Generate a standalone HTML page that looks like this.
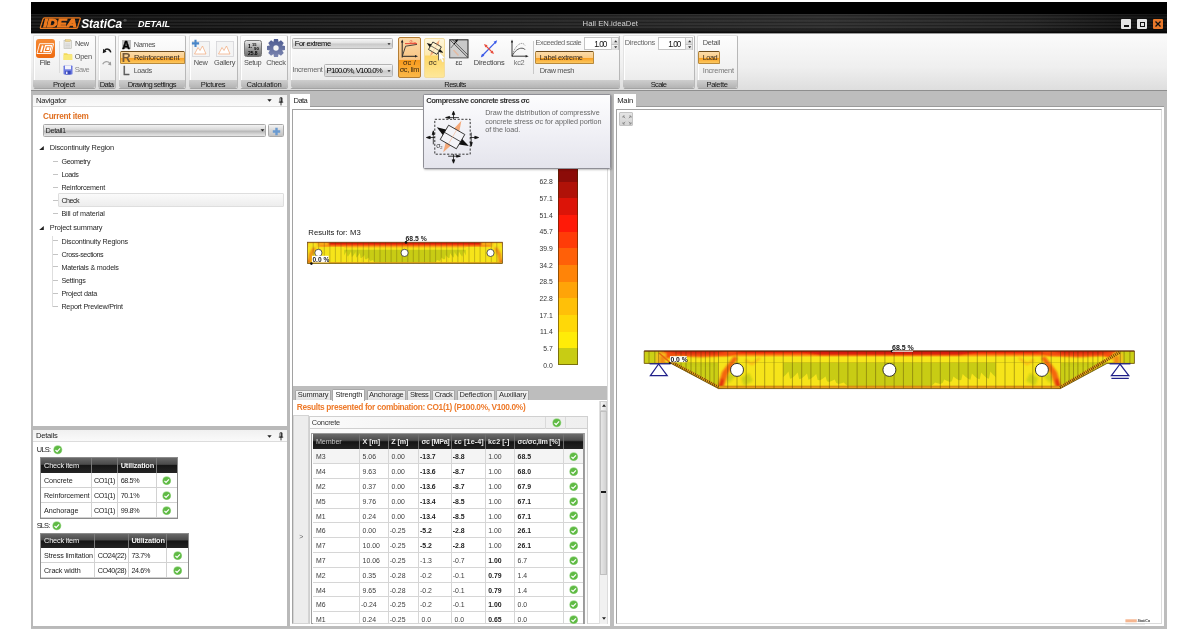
<!DOCTYPE html>
<html><head><meta charset="utf-8"><title>IDEA StatiCa Detail</title>
<style>
html,body{margin:0;padding:0}
body{width:1200px;height:630px;overflow:hidden;background:#fff;position:relative;font-family:"Liberation Sans",sans-serif;font-size:7px;color:#333}
div{position:absolute;box-sizing:border-box}
.t{white-space:nowrap;color:#3a3a3a}
.b{font-weight:bold}
svg{position:absolute;left:0;top:0;overflow:visible}
.ck{width:100%;height:100%}
.grp{background:linear-gradient(#fdfdfd,#f2f2f2 60%,#e8e8e8);border:1px solid #e2e2e2;border-right-color:#b8b8b8;border-bottom-color:#a4a4a4;border-radius:2px;box-shadow:inset 1px 1px 0 #fff}
.glab{background:linear-gradient(#cecece,#b4b4b4);border-radius:0 0 2px 2px}
.hdr{background:linear-gradient(#5a5a5a,#3a3a3a 45%,#101010 50%,#1c1c1c);}
.cell{border-right:1px solid #d4d4d4;border-bottom:1px solid #d4d4d4;background:#fff}
</style></head><body><div id="root" style="left:0;top:0;width:1200px;height:630px;will-change:transform">
<div style="left:31px;top:2px;width:1136px;height:626.5px;background:#bdbdbd"></div>
<div style="left:31px;top:2px;width:1136px;height:31px;background:#000"></div>
<div style="left:31px;top:13.6px;width:1136px;height:19px;background:repeating-linear-gradient(#1f1f1f 0,#1f1f1f .8px,#0e0e0e 1.3px,#0e0e0e 2px,#1a1a1a 2.6px,#202020 3.3px)"></div>
<div style="left:31px;top:13.6px;width:1136px;height:19px;background:linear-gradient(90deg,rgba(255,255,255,0) 0,rgba(255,255,255,.04) 30%,rgba(255,255,255,.1) 70%,rgba(255,255,255,.06) 88%,rgba(0,0,0,.3) 100%)"></div>
<div style="left:31px;top:28px;width:1136px;height:5px;background:linear-gradient(rgba(0,0,0,0),rgba(0,0,0,.75))"></div>
<svg style="left:36px;top:14px" width="140" height="18" viewBox="36 14 140 18">
<g fill="none" stroke="#ee7a1e" stroke-width="1.2"><path d="M44.6 17.8H79.4Q80.6 17.8 80.2 19L77.6 27.2Q77.2 28.4 76 28.4H41.2Q40 28.4 40.4 27.2L43 19Q43.4 17.8 44.6 17.8Z"/></g>
<text x="43.4" y="26.8" font-family="Liberation Sans,sans-serif" font-weight="bold" font-style="italic" font-size="10.2" fill="#ee7a1e" stroke="#ee7a1e" stroke-width=".9" stroke-linejoin="miter" textLength="33.4" lengthAdjust="spacingAndGlyphs">IDEA</text>
<text x="81.2" y="27.8" font-family="Liberation Sans,sans-serif" font-weight="bold" font-style="italic" font-size="12.2" fill="#fff" textLength="41" lengthAdjust="spacingAndGlyphs">StatiCa</text>
<text x="123.6" y="21.6" font-family="Liberation Sans,sans-serif" font-size="4.4" fill="#bbb">®</text>
<text x="138" y="27.3" font-family="Liberation Sans,sans-serif" font-weight="bold" font-style="italic" font-size="9.3" fill="#fff" textLength="32" lengthAdjust="spacingAndGlyphs">DETAIL</text>
</svg>
<div class="t" style="left:582.60px;top:19.2px;line-height:10px;font-size:7.7px;letter-spacing:0.041px;color:#d4d4d4">Hall EN.ideaDet</div>
<div style="left:1121px;top:19px;width:10px;height:10px;background:#e4e4e4;border-radius:1px"><div style="left:3px;top:6px;width:5px;height:1.5px;background:#111"></div></div>
<div style="left:1137px;top:19px;width:10px;height:10px;background:#e4e4e4;border-radius:1px"><div style="left:2.5px;top:2.5px;width:5px;height:5px;border:1px solid #111;border-top-width:1.5px"></div></div>
<div style="left:1153px;top:19px;width:10px;height:10px;background:#e8782a;border-radius:1px"><svg width="10" height="10" viewBox="0 0 10 10"><path d="M2.5 2.5L7.5 7.5M7.5 2.5L2.5 7.5" stroke="#111" stroke-width="1.3"/></svg></div>
<div style="left:31px;top:33px;width:1136px;height:57px;background:linear-gradient(#fbfbfb,#efefef 60%,#dedede)"></div>
<div style="left:31px;top:90px;width:1136px;height:0.9px;background:#8e8e8e"></div>
<div style="left:31px;top:33px;width:1136px;height:0.8px;background:#9a9a9a"></div>
<div class="grp" style="left:32.5px;top:34.5px;width:63px;height:54px;"></div>
<div class="glab" style="left:33px;top:80px;width:62px;height:8px;"></div>
<div class="t" style="left:53.00px;top:79.8px;line-height:10px;font-size:7.6px;letter-spacing:-0.236px;color:#161616">Project</div>
<div class="grp" style="left:97.5px;top:34.5px;width:18px;height:54px;"></div>
<div class="glab" style="left:98px;top:80px;width:17px;height:8px;"></div>
<div class="t" style="left:99.75px;top:79.8px;line-height:10px;font-size:7.6px;letter-spacing:-0.638px;color:#161616">Data</div>
<div class="grp" style="left:118px;top:34.5px;width:67.8px;height:54px;"></div>
<div class="glab" style="left:118.5px;top:80px;width:66.8px;height:8px;"></div>
<div class="t" style="left:127.65px;top:79.8px;line-height:10px;font-size:7.6px;letter-spacing:-0.480px;color:#161616">Drawing settings</div>
<div class="grp" style="left:188.5px;top:34.5px;width:49px;height:54px;"></div>
<div class="glab" style="left:189px;top:80px;width:48px;height:8px;"></div>
<div class="t" style="left:200.75px;top:79.8px;line-height:10px;font-size:7.6px;letter-spacing:-0.369px;color:#161616">Pictures</div>
<div class="grp" style="left:240px;top:34.5px;width:48px;height:54px;"></div>
<div class="glab" style="left:240.5px;top:80px;width:47px;height:8px;"></div>
<div class="t" style="left:246.50px;top:79.8px;line-height:10px;font-size:7.6px;letter-spacing:-0.236px;color:#161616">Calculation</div>
<div class="grp" style="left:290px;top:34.5px;width:330px;height:54px;"></div>
<div class="glab" style="left:290.5px;top:80px;width:329px;height:8px;"></div>
<div class="t" style="left:444.25px;top:79.8px;line-height:10px;font-size:7.6px;letter-spacing:-0.549px;color:#161616">Results</div>
<div class="grp" style="left:622.5px;top:34.5px;width:72px;height:54px;"></div>
<div class="glab" style="left:623px;top:80px;width:71px;height:8px;"></div>
<div class="t" style="left:650.75px;top:79.8px;line-height:10px;font-size:7.6px;letter-spacing:-0.702px;color:#161616">Scale</div>
<div class="grp" style="left:696.5px;top:34.5px;width:41px;height:54px;"></div>
<div class="glab" style="left:697px;top:80px;width:40px;height:8px;"></div>
<div class="t" style="left:706.50px;top:79.8px;line-height:10px;font-size:7.6px;letter-spacing:-0.380px;color:#161616">Palette</div>
<div style="left:36px;top:38.8px;width:19px;height:19px;background:linear-gradient(#f58a35,#ee6a10);border-radius:3px"><svg width="19" height="19" viewBox="0 0 19 19"><g fill="none" stroke="#fff"><path d="M3.6 4.7H17.6L15 14.5H1Z" stroke-width=".9"/><path d="M6.7 6.4L4.9 12.9" stroke-width="1.7"/><path d="M9.5 6.6H15.5L13.9 12.7H7.9Z" stroke-width="1.2"/></g><path d="M10.9 8.3H13.7L13 11H10.2Z" fill="#fff"/></svg></div>
<div class="t" style="left:39.80px;top:58px;line-height:10px;font-size:7.4px;letter-spacing:-0.331px;color:#333">File</div>
<div style="left:59.3px;top:41px;width:0.7px;height:32px;background:#dcdcdc"></div>
<svg style="left:63px;top:39px" width="10" height="10" viewBox="0 0 10 10"><rect x="1" y="1.5" width="7.5" height="8" fill="#e9e9e6" stroke="#b9b9b0" stroke-width=".6"/><rect x="2.3" y=".6" width="5" height="2" fill="#f0d890" stroke="#c9b070" stroke-width=".4"/><path d="M2.3 5H7.2M2.3 6.6H7.2M2.3 8.1H7.2" stroke="#c4c4c4" stroke-width=".6"/></svg>
<div class="t" style="left:74.90px;top:39.1px;line-height:10px;font-size:7.4px;letter-spacing:-0.334px;color:#505050">New</div>
<svg style="left:63px;top:51.4px" width="10" height="10" viewBox="0 0 10 10"><path d="M.6 2.2H4L5 3.2H9.2V9H.6Z" fill="#f3d95a"/><path d="M.6 4H9.2V9H.6Z" fill="#f8e878"/></svg>
<div class="t" style="left:74.80px;top:51.5px;line-height:10px;font-size:7.4px;letter-spacing:-0.275px;color:#505050">Open</div>
<svg style="left:63px;top:65px" width="10" height="10" viewBox="0 0 10 10"><rect x=".5" y=".5" width="9" height="9" rx=".8" fill="#6a78e0"/><rect x="2" y=".5" width="6" height="3.8" fill="#f4f4fa"/><rect x="2.4" y="6" width="5.2" height="3.5" fill="#3848b8"/><rect x="3" y="6.6" width="1.5" height="2.4" fill="#e8e8f8"/></svg>
<div class="t" style="left:74.80px;top:64.5px;line-height:10px;font-size:7.4px;letter-spacing:-0.717px;color:#8a8a8a">Save</div>
<svg style="left:101px;top:46px" width="12" height="24" viewBox="0 0 12 24"><path d="M3.4 5C4.8 2.4 8.6 2.2 9.8 6.4" fill="none" stroke="#1a1a1a" stroke-width="1.5"/><path d="M1.8 7.2L2.2 2.8L5.6 5.8Z" fill="#1a1a1a"/><path d="M1.7 18.2C3 15.2 7 14.8 8.6 17.2" fill="none" stroke="#a4a4a4" stroke-width="1.3"/><path d="M10.2 19.6L9.9 15.6L6.8 18.6Z" fill="#9a9a9a"/></svg>
<div style="left:121.8px;top:40.2px;width:9.2px;height:8.5px;background:#bebebe"></div>
<div class="t" style="left:122.20px;top:39.7px;line-height:10px;font-size:10.6px;font-weight:bold;letter-spacing:0.745px;color:#000;-webkit-text-stroke:.5px #000">A</div>
<div class="t" style="left:133.70px;top:39.5px;line-height:10px;font-size:7.4px;letter-spacing:-0.388px;color:#505050">Names</div>
<div style="left:120px;top:50.8px;width:64.8px;height:13px;background:linear-gradient(#fcdcaa,#fbcd88 50%,#f9a225 58%,#fcc860);border:1px solid #b98a3c;border-top-color:#6e4c1c;border-radius:1.5px"></div>
<div class="t" style="left:121.80px;top:51.7px;line-height:12px;font-size:12.3px;font-weight:bold;letter-spacing:-0.483px;color:#755a3c">R</div>
<div class="t" style="left:133.90px;top:53.1px;line-height:10px;font-size:7.4px;letter-spacing:-0.209px;color:#35281a">Reinforcement</div>
<div class="t" style="left:122.70px;top:64.5px;line-height:12px;font-size:12.3px;letter-spacing:0.160px;color:#5c5c5c;-webkit-text-stroke:.3px #5c5c5c">L</div>
<div class="t" style="left:133.70px;top:65.5px;line-height:10px;font-size:7.4px;letter-spacing:-0.432px;color:#505050">Loads</div>
<svg style="left:192.3px;top:40.5px" width="18" height="16" viewBox="0 0 18 16"><rect x=".5" y=".5" width="17" height="15" fill="#f4f4f4" stroke="#d4d4d8" stroke-width=".8"/><path d="M2.5 13L6 6.5L8 9.5L10.5 5L14 13Z" fill="#fff" stroke="#f2a878" stroke-width=".7"/></svg>
<svg style="left:191px;top:39px" width="9" height="9" viewBox="0 0 9 9"><path d="M4.5 .8V8M.9 4.4H8.1" stroke="#4a86c8" stroke-width="2.1"/></svg>
<svg style="left:216px;top:40.5px" width="18" height="16" viewBox="0 0 18 16"><rect x=".5" y=".5" width="17" height="15" fill="#f4f4f4" stroke="#d4d4d8" stroke-width=".8"/><path d="M2.5 13L6 6.5L8 9.5L10.5 5L14 13Z" fill="#fff" stroke="#f2a878" stroke-width=".7"/></svg>
<div class="t" style="left:193.80px;top:57.8px;line-height:10px;font-size:7.4px;letter-spacing:-0.334px;color:#505050">New</div>
<div class="t" style="left:214.00px;top:57.8px;line-height:10px;font-size:7.4px;letter-spacing:-0.348px;color:#505050">Gallery</div>
<div style="left:243.5px;top:39.5px;width:18.5px;height:17.5px;background:linear-gradient(#e8e8e8,#9a9a9a 55%,#6e6e6e);border:1px solid #777;border-radius:2.5px"></div>
<div class="t" style="left:247.93px;top:41.5px;line-height:6px;font-size:5px;font-weight:bold;color:#000">1.<span style="font-size:4px;vertical-align:1.5px">15</span></div>
<div class="t" style="left:254.05px;top:45.8px;line-height:5px;font-size:4.4px;font-weight:bold;color:#000">90</div>
<div class="t" style="left:247.93px;top:49.6px;line-height:6px;font-size:5px;font-weight:bold;color:#000">25.8</div>
<svg style="left:265.6px;top:38px" width="20" height="20" viewBox="0 0 20 20"><defs><linearGradient id="gg" x1="0" y1="0" x2="0" y2="1"><stop offset="0" stop-color="#4c5a90"/><stop offset="1" stop-color="#7c86b0"/></linearGradient></defs><polygon points="18.98,7.99 18.98,12.01 16.08,12.57 16.12,12.48 17.77,14.93 14.93,17.77 12.48,16.12 12.57,16.08 12.01,18.98 7.99,18.98 7.43,16.08 7.52,16.12 5.07,17.77 2.23,14.93 3.88,12.48 3.92,12.57 1.02,12.01 1.02,7.99 3.92,7.43 3.88,7.52 2.23,5.07 5.07,2.23 7.52,3.88 7.43,3.92 7.99,1.02 12.01,1.02 12.57,3.92 12.48,3.88 14.93,2.23 17.77,5.07 16.12,7.52 16.08,7.43" fill="url(#gg)"/><circle cx="10" cy="10" r="2.7" fill="#f4f4f4"/></svg>
<div class="t" style="left:244.00px;top:57.8px;line-height:10px;font-size:7.4px;letter-spacing:-0.407px;color:#505050">Setup</div>
<div class="t" style="left:266.20px;top:57.8px;line-height:10px;font-size:7.4px;letter-spacing:-0.315px;color:#505050">Check</div>
<div style="left:292px;top:37.8px;width:100.8px;height:11.7px;background:linear-gradient(#f6f6f6,#e2e2e2 45%,#c9c9c9 55%,#dcdcdc);border:1px solid #b4b4b4;border-radius:1.5px"></div>
<div class="t" style="left:294.80px;top:39.3px;line-height:10px;font-size:7.6px;letter-spacing:-0.451px;color:#000">For extreme</div>
<svg style="left:386.8px;top:42.6px" width="4" height="2.4" viewBox="0 0 5 3"><path d="M.5 .3H4.5L2.5 2.6Z" fill="#222"/></svg>
<div class="t" style="left:292.40px;top:65.2px;line-height:10px;font-size:7.4px;letter-spacing:-0.300px;color:#666">Increment</div>
<div style="left:324px;top:64.4px;width:68.8px;height:12.2px;background:linear-gradient(#f6f6f6,#e2e2e2 45%,#c9c9c9 55%,#dcdcdc);border:1px solid #b4b4b4;border-radius:1.5px"></div>
<div class="t" style="left:326.50px;top:66.2px;line-height:10px;font-size:7.8px;letter-spacing:-0.759px;color:#000">P100.0%, V100.0%</div>
<svg style="left:386.8px;top:69.6px" width="4" height="2.4" viewBox="0 0 5 3"><path d="M.5 .3H4.5L2.5 2.6Z" fill="#222"/></svg>
<div style="left:398px;top:37.3px;width:22.8px;height:40.3px;background:linear-gradient(#fbd9a6,#f9c585 55%,#f89a1c 57%,#fbb848 100%);border:1px solid #b47e34;border-radius:2px"></div>
<svg style="left:400px;top:38.5px" width="19" height="20" viewBox="0 0 19 20">
<path d="M2.2 18.5V2" stroke="#222" stroke-width="1" fill="none"/><path d="M.9 3.6L2.2 .6L3.5 3.6Z" fill="#222"/>
<path d="M2.2 17.3H16" stroke="#222" stroke-width="1" fill="none"/><path d="M15 16L18 17.3L15 18.6Z" fill="#222"/>
<path d="M2.4 17L5.6 7.2L17 5.4" stroke="#333" stroke-width=".9" fill="none"/>
<path d="M5 4.6H17" stroke="#e8503c" stroke-width="1.1"/>
<text x="9.6" y="3.6" font-family="Liberation Sans,sans-serif" font-size="4.6" fill="#e8503c">σ<tspan font-size="3" dy="1">lim</tspan></text>
</svg>
<div class="t" style="left:402.90px;top:57.7px;line-height:10px;font-size:7.4px;letter-spacing:0.155px;color:#3a2810">σc /</div>
<div class="t" style="left:399.65px;top:64.7px;line-height:10px;font-size:7.4px;letter-spacing:-0.333px;color:#3a2810">σc, lim</div>
<div style="left:423.5px;top:37.5px;width:21.5px;height:40.1px;background:linear-gradient(#fef6dc,#fde9ae 42%,#fdd766 45%,#fee798 100%);border:1px solid #f3dc9c;border-radius:2px"></div>
<svg style="left:420.5px;top:34.1px" width="28" height="28" viewBox="0 0 53.3 53.3"><path d="M35.4 10.8L33.3 21.4L28.1 18.4Z" fill="#f4a878"/><path d="M17.2 42.3L24.9 35.6L19.7 32.6Z" fill="#f4a878"/>
<path d="M22.6 15.2L38.8 24.5L30.4 38.8L14.2 29.5Z" fill="#fef2cc" stroke="#222" stroke-width="1.6"/>
<path d="M18.4 22.3L34.6 31.7" stroke="#222" stroke-width="1.2"/>
<path d="M30.7 19.9L22.3 34.1" stroke="#f4b088" stroke-width="1.2" opacity=".7"/>
<path d="M10.8 17.2L20 19.5L16.8 25.1Z" fill="#111"/><path d="M42.8 35.9L33 34.5L36.2 28.9Z" fill="#111"/></svg>
<div class="t" style="left:428.50px;top:57.7px;line-height:10px;font-size:7.4px;letter-spacing:-0.134px;color:#3a3020">σc</div>
<svg style="left:438px;top:50.8px" width="8" height="12" viewBox="0 0 8 12"><path d="M.7 .6V9.6L2.8 7.8L4.3 11.2L5.9 10.5L4.4 7.2H7.2Z" fill="#fff" stroke="#d8d0b8" stroke-width=".4"/><path d="M.5 .6V9.4" stroke="#333" stroke-width=".7"/></svg>
<svg style="left:448.6px;top:38.6px" width="20" height="20" viewBox="0 0 20 20">
<rect x=".8" y=".8" width="18.2" height="18" fill="#c9c9c9" stroke="#222" stroke-width="1"/>
<path d="M.8 .8L19 18.8" stroke="#222" stroke-width="1"/><path d="M3.5 .8L19 16" stroke="#333" stroke-width=".7"/>
<path d="M8 1.5L1.8 9" stroke="#111" stroke-width="1"/><path d="M9 .6L5.8 1.6L7.8 3.6Z" fill="#111"/>
<path d="M4.5 11L9.5 16.5" stroke="#f0a070" stroke-width="1.6"/>
<path d="M.8 .8V18.8H19Z" fill="#d6d6d6" opacity=".5"/>
</svg>
<div class="t" style="left:455.60px;top:57.9px;line-height:10px;font-size:7.4px;letter-spacing:-0.299px;color:#333">εc</div>
<svg style="left:479px;top:38.5px" width="20" height="20" viewBox="0 0 20 20">
<path d="M3 17L17 2.6" stroke="#3a5ae8" stroke-width="1.2"/><path d="M18.2 1.2L14.6 2.8L16.8 5Z" fill="#3a5ae8"/><path d="M1.8 18.4L3 14.8L5.4 16.8Z" fill="#3a5ae8"/>
<path d="M6.5 6.5L13.5 13.5" stroke="#e85040" stroke-width="1.1"/><path d="M5 5L8.6 6.2L6.4 8.4Z" fill="#e85040"/><path d="M15 15L11.4 13.8L13.6 11.6Z" fill="#e85040"/>
</svg>
<div class="t" style="left:473.80px;top:57.7px;line-height:10px;font-size:7.4px;letter-spacing:-0.230px;color:#444">Directions</div>
<svg style="left:509.6px;top:39px" width="20" height="19" viewBox="0 0 20 19">
<path d="M2 17.6V2" stroke="#222" stroke-width=".9" fill="none"/><path d="M.9 3.4L2 .6L3.1 3.4Z" fill="#222"/>
<path d="M2 17.2H16.4" stroke="#222" stroke-width=".9" fill="none"/><path d="M15.6 16L18.6 17.2L15.6 18.4Z" fill="#222"/>
<path d="M2.2 17C4 9 8.5 4.2 12 4.4C13.6 4.5 14.4 5.4 15 6.4" stroke="#555" stroke-width=".6" fill="none" stroke-dasharray="1.2 .8"/>
<path d="M2.2 17C4.5 12 8.5 9 12 9.2C13.6 9.3 14.6 10 15.2 10.8" stroke="#333" stroke-width=".8" fill="none"/>
</svg>
<div class="t" style="left:513.80px;top:57.7px;line-height:10px;font-size:7.4px;letter-spacing:-0.305px;color:#707070">kc2</div>
<div style="left:533.2px;top:40.5px;width:0.7px;height:33.5px;background:#c8c8c8"></div>
<div class="t" style="left:535.60px;top:37.6px;line-height:10px;font-size:7.4px;letter-spacing:-0.474px;color:#666">Exceeded scale</div>
<div style="left:584.3px;top:37.3px;width:34.9px;height:13px;background:#fff;border:1px solid #c4c4c4"></div>
<div class="t" style="left:594.20px;top:40px;line-height:10px;font-size:8.2px;letter-spacing:-0.939px;color:#111">1.00</div>
<div style="left:610.6px;top:38px;width:7.8px;height:5.6px;background:linear-gradient(#fafafa,#d8d8d8);border-left:.6px solid #ccc"><svg style="left:2.4px;top:1.6px" width="3.4" height="2.4" viewBox="0 0 4 3"><path d="M0 2.8H4L2 .3Z" fill="#333"/></svg></div>
<div style="left:610.6px;top:44.4px;width:7.8px;height:5.2px;background:linear-gradient(#fafafa,#d8d8d8);border-left:.6px solid #ccc"><svg style="left:2.4px;top:1.4px" width="3.4" height="2.4" viewBox="0 0 4 3"><path d="M0 .2H4L2 2.7Z" fill="#333"/></svg></div>
<div style="left:610.6px;top:43.6px;width:7.8px;height:0.8px;background:#c0c0c0"></div>
<div style="left:535.3px;top:50.6px;width:59.1px;height:13.2px;background:linear-gradient(#fcdcaa,#fbcd88 50%,#f9a225 58%,#fcc860);border:1px solid #b98a3c;border-top-color:#6e4c1c;border-radius:1.5px"></div>
<div class="t" style="left:539.80px;top:53px;line-height:10px;font-size:7.4px;letter-spacing:-0.315px;color:#35281a">Label extreme</div>
<div class="t" style="left:539.80px;top:65.6px;line-height:10px;font-size:7.4px;letter-spacing:-0.346px;color:#505050">Draw mesh</div>
<div class="t" style="left:624.80px;top:37.6px;line-height:10px;font-size:7.4px;letter-spacing:-0.270px;color:#666">Directions</div>
<div style="left:658px;top:37.3px;width:35.2px;height:13px;background:#fff;border:1px solid #c4c4c4"></div>
<div class="t" style="left:668.20px;top:40px;line-height:10px;font-size:8.2px;letter-spacing:-0.939px;color:#111">1.00</div>
<div style="left:684.6px;top:38px;width:7.8px;height:5.6px;background:linear-gradient(#fafafa,#d8d8d8);border-left:.6px solid #ccc"><svg style="left:2.4px;top:1.6px" width="3.4" height="2.4" viewBox="0 0 4 3"><path d="M0 2.8H4L2 .3Z" fill="#333"/></svg></div>
<div style="left:684.6px;top:44.4px;width:7.8px;height:5.2px;background:linear-gradient(#fafafa,#d8d8d8);border-left:.6px solid #ccc"><svg style="left:2.4px;top:1.4px" width="3.4" height="2.4" viewBox="0 0 4 3"><path d="M0 .2H4L2 2.7Z" fill="#333"/></svg></div>
<div style="left:684.6px;top:43.6px;width:7.8px;height:0.8px;background:#c0c0c0"></div>
<div class="t" style="left:702.80px;top:38px;line-height:10px;font-size:7.4px;letter-spacing:-0.270px;color:#505050">Detail</div>
<div style="left:698px;top:50.6px;width:21.8px;height:13.2px;background:linear-gradient(#fcdcaa,#fbcd88 50%,#f9a225 58%,#fcc860);border:1px solid #b98a3c;border-top-color:#6e4c1c;border-radius:1.5px"></div>
<div class="t" style="left:702.80px;top:53px;line-height:10px;font-size:7.4px;letter-spacing:-0.540px;color:#35281a">Load</div>
<div class="t" style="left:702.80px;top:65.6px;line-height:10px;font-size:7.4px;letter-spacing:-0.211px;color:#777">Increment</div>
<div style="left:31px;top:90.9px;width:259px;height:537.6px;background:#b9b9b9"></div>
<div style="left:33.3px;top:95px;width:253.8px;height:331.3px;background:#fff"></div>
<div style="left:33.3px;top:95px;width:253.8px;height:12.2px;background:linear-gradient(#f0f0f0,#fafafa);border-bottom:1px solid #dcdcdc"></div>
<div class="t" style="left:36.00px;top:95.7px;line-height:10px;font-size:7.6px;letter-spacing:-0.247px;color:#222">Navigator</div>
<svg style="left:267px;top:99.4px" width="5" height="3" viewBox="0 0 5 3"><path d="M.3 .2H4.7L2.5 2.8Z" fill="#222"/></svg>
<svg style="left:277.6px;top:96.8px" width="6" height="9" viewBox="0 0 6 9"><path d="M2 .8H4V5H2Z" fill="none" stroke="#222" stroke-width=".8"/><path d="M.8 5.2H5.2M3 5.2V8.4" stroke="#222" stroke-width=".9"/><path d="M3.6 .8V5" stroke="#222" stroke-width=".9"/></svg>
<div class="t" style="left:43.00px;top:110.6px;line-height:12px;font-size:8.2px;font-weight:bold;letter-spacing:-0.271px;color:#e07022">Current item</div>
<div style="left:43px;top:123.6px;width:223.4px;height:13.8px;background:linear-gradient(#f2f2f2,#dadada 40%,#b9b9b9 58%,#d4d4d4 80%,#e6e6e6);border:1px solid #a9a9a9;border-radius:1.5px"></div>
<div class="t" style="left:45.60px;top:125.6px;line-height:10px;font-size:7.4px;letter-spacing:-0.433px;color:#222">Detail1</div>
<svg style="left:260.4px;top:129.4px" width="5" height="3" viewBox="0 0 5 3"><path d="M.5 .3H4.5L2.5 2.6Z" fill="#222"/></svg>
<div style="left:268.2px;top:123.6px;width:15.6px;height:13.8px;background:linear-gradient(#f4f4f4,#d6d6d6 50%,#c2c2c2);border:1px solid #a9a9a9;border-radius:1.5px"><svg style="left:3.2px;top:2.6px" width="9" height="9" viewBox="0 0 9 9"><path d="M4.5 .8V8.2M.8 4.5H8.2" stroke="#6a9ad0" stroke-width="2.4"/></svg></div>
<svg style="left:38.6px;top:146.4px" width="5" height="4" viewBox="0 0 5 4"><path d="M4.8 0V4H.2Z" fill="#222"/></svg>
<div class="t" style="left:49.80px;top:143.1px;line-height:10px;font-size:7.4px;letter-spacing:-0.158px;color:#262626">Discontinuity Region</div>
<svg style="left:38.6px;top:225.9px" width="5" height="4" viewBox="0 0 5 4"><path d="M4.8 0V4H.2Z" fill="#222"/></svg>
<div class="t" style="left:49.80px;top:222.6px;line-height:10px;font-size:7.4px;letter-spacing:-0.194px;color:#262626">Project summary</div>
<div style="left:58.3px;top:193.4px;width:225.5px;height:14px;background:linear-gradient(#fafafa,#ededed);border:1px solid #dedede;border-radius:1px"></div>
<div style="left:52.6px;top:160.9px;width:5px;height:0.7px;background:#c4c4c4"></div>
<div class="t" style="left:61.40px;top:157.2px;line-height:10px;font-size:7.2px;letter-spacing:-0.351px;color:#262626">Geometry</div>
<div style="left:52.6px;top:174.1px;width:5px;height:0.7px;background:#c4c4c4"></div>
<div class="t" style="left:61.40px;top:170.4px;line-height:10px;font-size:7.2px;letter-spacing:-0.523px;color:#262626">Loads</div>
<div style="left:52.6px;top:186.9px;width:5px;height:0.7px;background:#c4c4c4"></div>
<div class="t" style="left:61.40px;top:183.2px;line-height:10px;font-size:7.2px;letter-spacing:-0.232px;color:#262626">Reinforcement</div>
<div style="left:52.6px;top:200px;width:5px;height:0.7px;background:#c4c4c4"></div>
<div class="t" style="left:61.40px;top:196.3px;line-height:10px;font-size:7.2px;letter-spacing:-0.561px;color:#262626">Check</div>
<div style="left:52.6px;top:213.1px;width:5px;height:0.7px;background:#c4c4c4"></div>
<div class="t" style="left:61.40px;top:209.4px;line-height:10px;font-size:7.2px;letter-spacing:-0.107px;color:#262626">Bill of material</div>
<div style="left:52.6px;top:240.4px;width:5px;height:0.7px;background:#c4c4c4"></div>
<div class="t" style="left:61.40px;top:236.7px;line-height:10px;font-size:7.2px;letter-spacing:-0.116px;color:#262626">Discontinuity Regions</div>
<div style="left:52.6px;top:253.5px;width:5px;height:0.7px;background:#c4c4c4"></div>
<div class="t" style="left:61.40px;top:249.8px;line-height:10px;font-size:7.2px;letter-spacing:-0.401px;color:#262626">Cross-sections</div>
<div style="left:52.6px;top:266.4px;width:5px;height:0.7px;background:#c4c4c4"></div>
<div class="t" style="left:61.40px;top:262.7px;line-height:10px;font-size:7.2px;letter-spacing:-0.212px;color:#262626">Materials &amp; models</div>
<div style="left:52.6px;top:279.6px;width:5px;height:0.7px;background:#c4c4c4"></div>
<div class="t" style="left:61.40px;top:275.9px;line-height:10px;font-size:7.2px;letter-spacing:-0.227px;color:#262626">Settings</div>
<div style="left:52.6px;top:292.6px;width:5px;height:0.7px;background:#c4c4c4"></div>
<div class="t" style="left:61.40px;top:288.9px;line-height:10px;font-size:7.2px;letter-spacing:-0.235px;color:#262626">Project data</div>
<div style="left:52.6px;top:305.7px;width:5px;height:0.7px;background:#c4c4c4"></div>
<div class="t" style="left:61.40px;top:302px;line-height:10px;font-size:7.2px;letter-spacing:-0.221px;color:#262626">Report Preview/Print</div>
<div style="left:52.2px;top:236px;width:0.7px;height:70.5px;background:#dedede"></div>
<div style="left:33.3px;top:430px;width:253.8px;height:196px;background:#fff"></div>
<div style="left:33.3px;top:430px;width:253.8px;height:12.2px;background:linear-gradient(#f0f0f0,#fafafa);border-bottom:1px solid #dcdcdc"></div>
<div class="t" style="left:36.00px;top:431px;line-height:10px;font-size:7.6px;letter-spacing:-0.247px;color:#222">Details</div>
<svg style="left:267px;top:434.6px" width="5" height="3" viewBox="0 0 5 3"><path d="M.3 .2H4.7L2.5 2.8Z" fill="#222"/></svg>
<svg style="left:277.6px;top:432px" width="6" height="9" viewBox="0 0 6 9"><path d="M2 .8H4V5H2Z" fill="none" stroke="#222" stroke-width=".8"/><path d="M.8 5.2H5.2M3 5.2V8.4" stroke="#222" stroke-width=".9"/><path d="M3.6 .8V5" stroke="#222" stroke-width=".9"/></svg>
<div class="t" style="left:36.80px;top:445.2px;line-height:10px;font-size:7.4px;letter-spacing:-0.713px;color:#222">ULS:</div>
<div style="left:53.2px;top:445.2px;width:9.6px;height:9.6px"><svg class="ck" viewBox="0 0 10 10"><circle cx="5" cy="5" r="4.7" fill="#a4da94"/><circle cx="5" cy="5" r="4" fill="#5fba44"/><path d="M2.6 5.2 L4.3 6.9 L7.4 3.5" fill="none" stroke="#fff" stroke-width="1.3"/></svg></div>
<div class="t" style="left:36.80px;top:520.8px;line-height:10px;font-size:7.4px;letter-spacing:-0.861px;color:#222">SLS:</div>
<div style="left:51.8px;top:521px;width:9.6px;height:9.6px"><svg class="ck" viewBox="0 0 10 10"><circle cx="5" cy="5" r="4.7" fill="#a4da94"/><circle cx="5" cy="5" r="4" fill="#5fba44"/><path d="M2.6 5.2 L4.3 6.9 L7.4 3.5" fill="none" stroke="#fff" stroke-width="1.3"/></svg></div>
<div style="left:40px;top:457.2px;width:138px;height:61.6px;background:#8c8c8c"></div>
<div style="left:41px;top:458.2px;width:136px;height:14.6px;background:linear-gradient(#686868,#4a4a4a 42%,#161616 50%,#242424);"></div>
<div class="t" style="left:44.00px;top:460.8px;line-height:10px;font-size:7.4px;letter-spacing:-0.201px;color:#f2f2f2">Check item</div>
<div style="left:90.6px;top:458.2px;width:0.8px;height:14.6px;background:#7a7a7a"></div>
<div style="left:117.3px;top:458.2px;width:0.8px;height:14.6px;background:#7a7a7a"></div>
<div class="t" style="left:120.70px;top:460.8px;line-height:10px;font-size:7.4px;font-weight:bold;letter-spacing:-0.177px;color:#f2f2f2">Utilization</div>
<div style="left:156.2px;top:458.2px;width:0.8px;height:14.6px;background:#7a7a7a"></div>
<div style="left:41px;top:472.8px;width:136px;height:15px;background:#fff;border-bottom:1px solid #d2d2d2"></div>
<div class="t" style="left:44.00px;top:475.9px;line-height:10px;font-size:7.2px;letter-spacing:-0.077px;color:#1c1c1c">Concrete</div>
<div style="left:90.6px;top:472.8px;width:0.8px;height:15px;background:#d2d2d2"></div>
<div class="t" style="left:94.00px;top:475.9px;line-height:10px;font-size:7.2px;letter-spacing:-0.434px;color:#1c1c1c">CO1(1)</div>
<div style="left:117.3px;top:472.8px;width:0.8px;height:15px;background:#d2d2d2"></div>
<div class="t" style="left:120.70px;top:475.9px;line-height:10px;font-size:7.2px;letter-spacing:-0.363px;color:#1c1c1c">68.5%</div>
<div style="left:156.2px;top:472.8px;width:0.8px;height:15px;background:#d2d2d2"></div>
<div style="left:162.1px;top:475.9px;width:9.4px;height:9.4px"><svg class="ck" viewBox="0 0 10 10"><circle cx="5" cy="5" r="4.7" fill="#a4da94"/><circle cx="5" cy="5" r="4" fill="#5fba44"/><path d="M2.6 5.2 L4.3 6.9 L7.4 3.5" fill="none" stroke="#fff" stroke-width="1.3"/></svg></div>
<div style="left:41px;top:487.8px;width:136px;height:15px;background:#fff;border-bottom:1px solid #d2d2d2"></div>
<div class="t" style="left:44.00px;top:490.9px;line-height:10px;font-size:7.2px;letter-spacing:-0.094px;color:#1c1c1c">Reinforcement</div>
<div style="left:90.6px;top:487.8px;width:0.8px;height:15px;background:#d2d2d2"></div>
<div class="t" style="left:94.00px;top:490.9px;line-height:10px;font-size:7.2px;letter-spacing:-0.434px;color:#1c1c1c">CO1(1)</div>
<div style="left:117.3px;top:487.8px;width:0.8px;height:15px;background:#d2d2d2"></div>
<div class="t" style="left:120.70px;top:490.9px;line-height:10px;font-size:7.2px;letter-spacing:-0.363px;color:#1c1c1c">70.1%</div>
<div style="left:156.2px;top:487.8px;width:0.8px;height:15px;background:#d2d2d2"></div>
<div style="left:162.1px;top:490.9px;width:9.4px;height:9.4px"><svg class="ck" viewBox="0 0 10 10"><circle cx="5" cy="5" r="4.7" fill="#a4da94"/><circle cx="5" cy="5" r="4" fill="#5fba44"/><path d="M2.6 5.2 L4.3 6.9 L7.4 3.5" fill="none" stroke="#fff" stroke-width="1.3"/></svg></div>
<div style="left:41px;top:502.8px;width:136px;height:15px;background:#fff;border-bottom:1px solid #d2d2d2"></div>
<div class="t" style="left:44.00px;top:505.9px;line-height:10px;font-size:7.2px;letter-spacing:-0.047px;color:#1c1c1c">Anchorage</div>
<div style="left:90.6px;top:502.8px;width:0.8px;height:15px;background:#d2d2d2"></div>
<div class="t" style="left:94.00px;top:505.9px;line-height:10px;font-size:7.2px;letter-spacing:-0.434px;color:#1c1c1c">CO1(1)</div>
<div style="left:117.3px;top:502.8px;width:0.8px;height:15px;background:#d2d2d2"></div>
<div class="t" style="left:120.70px;top:505.9px;line-height:10px;font-size:7.2px;letter-spacing:-0.363px;color:#1c1c1c">99.8%</div>
<div style="left:156.2px;top:502.8px;width:0.8px;height:15px;background:#d2d2d2"></div>
<div style="left:162.1px;top:505.9px;width:9.4px;height:9.4px"><svg class="ck" viewBox="0 0 10 10"><circle cx="5" cy="5" r="4.7" fill="#a4da94"/><circle cx="5" cy="5" r="4" fill="#5fba44"/><path d="M2.6 5.2 L4.3 6.9 L7.4 3.5" fill="none" stroke="#fff" stroke-width="1.3"/></svg></div>
<div style="left:40px;top:532.6px;width:149.4px;height:46.6px;background:#8c8c8c"></div>
<div style="left:41px;top:533.6px;width:147.4px;height:14.6px;background:linear-gradient(#686868,#4a4a4a 42%,#161616 50%,#242424);"></div>
<div class="t" style="left:44.00px;top:536.2px;line-height:10px;font-size:7.4px;letter-spacing:-0.201px;color:#f2f2f2">Check item</div>
<div style="left:94.3px;top:533.6px;width:0.8px;height:14.6px;background:#7a7a7a"></div>
<div style="left:128px;top:533.6px;width:0.8px;height:14.6px;background:#7a7a7a"></div>
<div class="t" style="left:131.40px;top:536.2px;line-height:10px;font-size:7.4px;font-weight:bold;letter-spacing:-0.177px;color:#f2f2f2">Utilization</div>
<div style="left:166.3px;top:533.6px;width:0.8px;height:14.6px;background:#7a7a7a"></div>
<div style="left:41px;top:548.2px;width:147.4px;height:15px;background:#fff;border-bottom:1px solid #d2d2d2"></div>
<div class="t" style="left:44.00px;top:551.3px;line-height:10px;font-size:7.2px;letter-spacing:-0.107px;color:#1c1c1c">Stress limitation</div>
<div style="left:94.3px;top:548.2px;width:0.8px;height:15px;background:#d2d2d2"></div>
<div class="t" style="left:97.70px;top:551.3px;line-height:10px;font-size:7.2px;letter-spacing:-0.376px;color:#1c1c1c">CO24(22)</div>
<div style="left:128px;top:548.2px;width:0.8px;height:15px;background:#d2d2d2"></div>
<div class="t" style="left:131.40px;top:551.3px;line-height:10px;font-size:7.2px;letter-spacing:-0.363px;color:#1c1c1c">73.7%</div>
<div style="left:166.3px;top:548.2px;width:0.8px;height:15px;background:#d2d2d2"></div>
<div style="left:172.85px;top:551.3px;width:9.4px;height:9.4px"><svg class="ck" viewBox="0 0 10 10"><circle cx="5" cy="5" r="4.7" fill="#a4da94"/><circle cx="5" cy="5" r="4" fill="#5fba44"/><path d="M2.6 5.2 L4.3 6.9 L7.4 3.5" fill="none" stroke="#fff" stroke-width="1.3"/></svg></div>
<div style="left:41px;top:563.2px;width:147.4px;height:15px;background:#fff;border-bottom:1px solid #d2d2d2"></div>
<div class="t" style="left:44.00px;top:566.3px;line-height:10px;font-size:7.2px;letter-spacing:-0.092px;color:#1c1c1c">Crack width</div>
<div style="left:94.3px;top:563.2px;width:0.8px;height:15px;background:#d2d2d2"></div>
<div class="t" style="left:97.70px;top:566.3px;line-height:10px;font-size:7.2px;letter-spacing:-0.376px;color:#1c1c1c">CO40(28)</div>
<div style="left:128px;top:563.2px;width:0.8px;height:15px;background:#d2d2d2"></div>
<div class="t" style="left:131.40px;top:566.3px;line-height:10px;font-size:7.2px;letter-spacing:-0.363px;color:#1c1c1c">24.6%</div>
<div style="left:166.3px;top:563.2px;width:0.8px;height:15px;background:#d2d2d2"></div>
<div style="left:172.85px;top:566.3px;width:9.4px;height:9.4px"><svg class="ck" viewBox="0 0 10 10"><circle cx="5" cy="5" r="4.7" fill="#a4da94"/><circle cx="5" cy="5" r="4" fill="#5fba44"/><path d="M2.6 5.2 L4.3 6.9 L7.4 3.5" fill="none" stroke="#fff" stroke-width="1.3"/></svg></div>
<div style="left:289.9px;top:106.3px;width:320.5px;height:519.7px;background:#fff"></div>
<div style="left:289.9px;top:94px;width:20.4px;height:13px;background:#fff"></div>
<div style="left:289.9px;top:106px;width:320.5px;height:0.6px;background:#9a9a9a"></div>
<div style="left:289.9px;top:94px;width:20.4px;height:13px;background:#fff"></div>
<div class="t" style="left:293.60px;top:96px;line-height:10px;font-size:7.6px;letter-spacing:-0.613px;color:#222">Data</div>
<div style="left:292.4px;top:108.8px;width:315.8px;height:515.4px;background:#fff;border:.7px solid #a2a2a2;border-right-color:#dcdcdc;border-bottom-color:#dcdcdc"></div>
<div class="t" style="left:308.3px;top:227.7px;line-height:10px;font-size:7.7px;color:#151515;letter-spacing:0.05px">Results for: M3</div>
<svg style="left:300px;top:232px" width="210" height="40" viewBox="300 232 210 40">
<defs>
<linearGradient id="bm1" x1="0" y1="0" x2="0" y2="1">
<stop offset="0" stop-color="#a81008"/><stop offset=".06" stop-color="#d81c08"/><stop offset=".12" stop-color="#f0440c"/><stop offset=".2" stop-color="#fb9a16"/><stop offset=".27" stop-color="#f8de18"/><stop offset=".33" stop-color="#f4e418"/><stop offset=".39" stop-color="#c8cc14"/><stop offset="1" stop-color="#c8cc14"/>
</linearGradient>
<linearGradient id="bmL" x1="0" y1="0" x2="1" y2="0">
<stop offset="0" stop-color="#f6e41a"/><stop offset=".8" stop-color="#f6e41a"/><stop offset="1" stop-color="#f6e41a" stop-opacity="0"/>
</linearGradient>
<linearGradient id="bmR" x1="1" y1="0" x2="0" y2="0">
<stop offset="0" stop-color="#f6e41a"/><stop offset=".8" stop-color="#f6e41a"/><stop offset="1" stop-color="#f6e41a" stop-opacity="0"/>
</linearGradient>
<filter id="bl1" x="-20%" y="-20%" width="140%" height="140%"><feGaussianBlur stdDeviation=".9"/></filter>
<clipPath id="cp1"><rect x="307.6" y="242.2" width="194.8" height="21.2"/></clipPath>
</defs>
<rect x="307.6" y="242.2" width="194.8" height="21.2" fill="url(#bm1)"/>
<g clip-path="url(#cp1)">
<rect x="307.6" y="247" width="36.6" height="17" fill="#f6e41a"/>
<rect x="465.8" y="247" width="36.6" height="17" fill="#f6e41a"/>
<g fill="#f6e41a"><path d="M344.0 263.4L344.0 255.4L345.5 253.0L346.6 250.6L347.4 256.6L348.5 256.0L348.5 263.4Z"/><path d="M466.0 263.4L466.0 255.4L464.5 253.0L463.4 250.6L462.6 256.6L461.5 256.0L461.5 263.4Z"/><path d="M348.4 263.4L348.4 256.0L349.9 253.8L351.0 251.6L351.8 257.1L352.9 256.3L352.9 263.4Z"/><path d="M461.6 263.4L461.6 256.0L460.1 253.8L459.0 251.6L458.2 257.1L457.1 256.3L457.1 263.4Z"/><path d="M352.8 263.4L352.8 256.3L354.3 254.2L355.4 252.1L356.2 257.4L357.3 256.9L357.3 263.4Z"/><path d="M457.2 263.4L457.2 256.3L455.7 254.2L454.6 252.1L453.8 257.4L452.7 256.9L452.7 263.4Z"/><path d="M357.2 263.4L357.2 256.9L358.7 255.0L359.8 253.1L360.6 257.9L361.7 258.1L361.7 263.4Z"/><path d="M452.8 263.4L452.8 256.9L451.3 255.0L450.2 253.1L449.4 257.9L448.3 258.1L448.3 263.4Z"/><path d="M361.6 263.4L361.6 258.1L363.1 256.6L364.2 255.1L365.0 258.9L366.1 259.6L366.1 263.4Z"/><path d="M448.4 263.4L448.4 258.1L446.9 256.6L445.8 255.1L445.0 258.9L443.9 259.6L443.9 263.4Z"/><path d="M366.0 263.4L366.0 259.6L367.5 258.6L368.6 257.6L369.4 260.1L370.5 261.1L370.5 263.4Z"/><path d="M444.0 263.4L444.0 259.6L442.5 258.6L441.4 257.6L440.6 260.1L439.5 261.1L439.5 263.4Z"/><path d="M370.4 263.4L370.4 261.1L371.9 260.6L373.0 260.1L373.8 261.4L374.9 262.6L374.9 263.4Z"/><path d="M439.6 263.4L439.6 261.1L438.1 260.6L437.0 260.1L436.2 261.4L435.1 262.6L435.1 263.4Z"/></g>
<g filter="url(#bl1)">
<rect x="307" y="242" width="12" height="6" fill="#f6e41a"/><rect x="491" y="242" width="12" height="6" fill="#f6e41a"/>
<rect x="317" y="242" width="12" height="4" fill="#fbb018"/><rect x="481" y="242" width="12" height="4" fill="#fbb018"/>
<path d="M308 264L309 254L313 247L316 248L312 256L311 264Z" fill="#f08a18"/>
<path d="M502 264L501 254L497 247L494 248L498 256L499 264Z" fill="#f08a18"/>
<path d="M307 264V258L310 264Z" fill="#e04010"/><path d="M503 264V258L500 264Z" fill="#e04010"/>
</g>
</g>
<g stroke="#5a4a10" stroke-width=".45" opacity=".7"><path d="M313.2 242.3V263.3"/><path d="M318.7 242.3V263.3"/><path d="M324.3 242.3V263.3"/><path d="M329.9 242.3V263.3"/><path d="M335.4 242.3V263.3"/><path d="M341.0 242.3V263.3"/><path d="M346.6 242.3V263.3"/><path d="M352.1 242.3V263.3"/><path d="M357.7 242.3V263.3"/><path d="M363.3 242.3V263.3"/><path d="M368.8 242.3V263.3"/><path d="M374.4 242.3V263.3"/><path d="M380.0 242.3V263.3"/><path d="M385.5 242.3V263.3"/><path d="M391.1 242.3V263.3"/><path d="M396.7 242.3V263.3"/><path d="M402.2 242.3V263.3"/><path d="M407.8 242.3V263.3"/><path d="M413.3 242.3V263.3"/><path d="M418.9 242.3V263.3"/><path d="M424.5 242.3V263.3"/><path d="M430.0 242.3V263.3"/><path d="M435.6 242.3V263.3"/><path d="M441.2 242.3V263.3"/><path d="M446.7 242.3V263.3"/><path d="M452.3 242.3V263.3"/><path d="M457.9 242.3V263.3"/><path d="M463.4 242.3V263.3"/><path d="M469.0 242.3V263.3"/><path d="M474.6 242.3V263.3"/><path d="M480.1 242.3V263.3"/><path d="M485.7 242.3V263.3"/><path d="M491.3 242.3V263.3"/><path d="M496.8 242.3V263.3"/></g>
<path d="M307.6 262.6H502.4" stroke="#d89a18" stroke-width="1"/>
<rect x="307.6" y="242.2" width="194.8" height="21.2" fill="none" stroke="#6a4a10" stroke-width=".7"/>
<g fill="#fff" stroke="#333" stroke-width=".8"><circle cx="318.4" cy="252.9" r="3.6"/><circle cx="404.6" cy="252.9" r="3.6"/><circle cx="490.5" cy="252.9" r="3.6"/></g>
<rect x="312" y="255.8" width="16.6" height="6.6" fill="#fff"/>
<circle cx="406" cy="242.4" r="1.3" fill="#111"/><circle cx="311.4" cy="263.6" r="1.3" fill="#111"/>
<text x="405.6" y="241" font-family="Liberation Sans,sans-serif" font-weight="bold" font-size="6.8" fill="#222">68.5 %</text>
<text x="312.4" y="261.8" font-family="Liberation Sans,sans-serif" font-weight="bold" font-size="6.6" fill="#222">0.0 %</text>
</svg>
<div style="left:558.4px;top:164.9px;width:20px;height:16.87px;background:#8c0c08"></div>
<div style="left:558.4px;top:181.57px;width:20px;height:16.87px;background:#b01208"></div>
<div style="left:558.4px;top:198.24px;width:20px;height:16.87px;background:#dc1408"></div>
<div style="left:558.4px;top:214.91px;width:20px;height:16.87px;background:#ff1a08"></div>
<div style="left:558.4px;top:231.58px;width:20px;height:16.87px;background:#ff3c08"></div>
<div style="left:558.4px;top:248.25px;width:20px;height:16.87px;background:#ff6008"></div>
<div style="left:558.4px;top:264.92px;width:20px;height:16.87px;background:#ff8408"></div>
<div style="left:558.4px;top:281.59px;width:20px;height:16.87px;background:#ffa408"></div>
<div style="left:558.4px;top:298.26px;width:20px;height:16.87px;background:#ffc008"></div>
<div style="left:558.4px;top:314.93px;width:20px;height:16.87px;background:#ffd808"></div>
<div style="left:558.4px;top:331.6px;width:20px;height:16.87px;background:#ffec08"></div>
<div style="left:558.4px;top:348.27px;width:20px;height:16.87px;background:#c8cc14"></div>
<div style="left:558.4px;top:164.9px;width:20px;height:200.34px;border:1px solid rgba(60,40,0,.55)"></div>
<div class="t" style="left:539.57px;top:177.37px;line-height:10px;font-size:6.8px;color:#333">62.8</div>
<div class="t" style="left:539.57px;top:194.04px;line-height:10px;font-size:6.8px;color:#333">57.1</div>
<div class="t" style="left:539.57px;top:210.71px;line-height:10px;font-size:6.8px;color:#333">51.4</div>
<div class="t" style="left:539.57px;top:227.38px;line-height:10px;font-size:6.8px;color:#333">45.7</div>
<div class="t" style="left:539.57px;top:244.05px;line-height:10px;font-size:6.8px;color:#333">39.9</div>
<div class="t" style="left:539.57px;top:260.72px;line-height:10px;font-size:6.8px;color:#333">34.2</div>
<div class="t" style="left:539.57px;top:277.39px;line-height:10px;font-size:6.8px;color:#333">28.5</div>
<div class="t" style="left:539.57px;top:294.06px;line-height:10px;font-size:6.8px;color:#333">22.8</div>
<div class="t" style="left:539.57px;top:310.73px;line-height:10px;font-size:6.8px;color:#333">17.1</div>
<div class="t" style="left:540.07px;top:327.4px;line-height:10px;font-size:6.8px;color:#333">11.4</div>
<div class="t" style="left:543.35px;top:344.07px;line-height:10px;font-size:6.8px;color:#333">5.7</div>
<div class="t" style="left:543.35px;top:360.74px;line-height:10px;font-size:6.8px;color:#333">0.0</div>
<div style="left:423.4px;top:93.8px;width:187.2px;height:74.8px;background:linear-gradient(#fdfdfe,#eeeef4 60%,#e4e4ec);border:1px solid #8f8f96;border-radius:1.5px;box-shadow:1px 1px 2px rgba(0,0,0,.25)"></div>
<div class="t" style="left:426.20px;top:95.6px;line-height:10px;font-size:7.6px;font-weight:bold;letter-spacing:-0.479px;color:#333">Compressive concrete stress σc</div>
<div class="t" style="left:485.20px;top:108.1px;line-height:10px;font-size:7.2px;letter-spacing:-0.040px;color:#666">Draw the distribution of compressive</div>
<div class="t" style="left:485.20px;top:116.8px;line-height:10px;font-size:7.2px;letter-spacing:-0.055px;color:#666">concrete stress σc for applied portion</div>
<div class="t" style="left:485.20px;top:125.2px;line-height:10px;font-size:7.2px;letter-spacing:-0.052px;color:#666">of the load.</div>
<svg style="left:426px;top:110px" width="54" height="54" viewBox="0 0 54 54">
<rect x="8.8" y="9.3" width="35.4" height="34.9" fill="none" stroke="#222" stroke-width=".9" stroke-dasharray="2.2 1.6"/>
<path d="M35.4 10.8L33.3 21.4L28.1 18.4Z" fill="#f4a878"/><path d="M17.2 42.3L24.9 35.6L19.7 32.6Z" fill="#f4a878"/>
<path d="M22.6 15.2L38.8 24.5L30.4 38.8L14.2 29.5Z" fill="#f4f4f8" stroke="#222" stroke-width=".9"/>
<path d="M18.4 22.3L34.6 31.7" stroke="#222" stroke-width=".8"/>
<path d="M30.7 19.9L22.3 34.1" stroke="#f4b088" stroke-width=".8" opacity=".7"/>
<path d="M10.8 17.2L20 19.5L16.8 25.1Z" fill="#111"/><path d="M42.8 35.9L33 34.5L36.2 28.9Z" fill="#111"/>
<g stroke="#111" stroke-width=".8" fill="#111">
<path d="M27.5 2V9.3"/><path d="M20.4 7.6H32.9"/><path d="M27.5 1.2L26.2 4.6H28.8Z"/><path d="M19.6 7.6L23.6 6.4V8.4Z"/>
<path d="M27.5 44.2V52.4"/><path d="M22.1 46.2H33.6"/><path d="M27.5 53.2L26.2 49.8H28.8Z"/><path d="M34.4 46.2L30.6 45.2V47.2Z"/>
<path d="M1.2 27.5H8.8"/><path d="M7.3 21.8V34.4"/><path d="M.4 27.5L4.2 26.2V28.8Z"/><path d="M7.3 20.8L6.2 24.6H8.4Z"/>
<path d="M44.2 27.5H51.8"/><path d="M45.2 22.6V35.2"/><path d="M52.6 27.5L48.8 26.2V28.8Z"/><path d="M45.2 36.2L44.1 32.4H46.3Z"/>
</g>
<text x="10.2" y="38" font-family="Liberation Sans,sans-serif" font-size="6.6" fill="#333">σ<tspan font-size="4" dy="1.2">2</tspan></text>
</svg>
<div style="left:293px;top:385.8px;width:314.4px;height:14.7px;background:#bdbdbd"></div>
<div style="left:295.4px;top:390px;width:35.4px;height:10.4px;background:linear-gradient(#f4f4f4,#e2e2e2);border:1px solid #a8a8a8;border-bottom:none;border-radius:1.5px 1.5px 0 0"></div>
<div class="t" style="left:297.80px;top:389.8px;line-height:10px;font-size:7.5px;letter-spacing:-0.212px;color:#2a2a2a">Summary</div>
<div style="left:366.6px;top:390px;width:39.4px;height:10.4px;background:linear-gradient(#f4f4f4,#e2e2e2);border:1px solid #a8a8a8;border-bottom:none;border-radius:1.5px 1.5px 0 0"></div>
<div class="t" style="left:369.00px;top:389.8px;line-height:10px;font-size:7.5px;letter-spacing:-0.186px;color:#2a2a2a">Anchorage</div>
<div style="left:407.4px;top:390px;width:23.4px;height:10.4px;background:linear-gradient(#f4f4f4,#e2e2e2);border:1px solid #a8a8a8;border-bottom:none;border-radius:1.5px 1.5px 0 0"></div>
<div class="t" style="left:410.00px;top:389.8px;line-height:10px;font-size:7.5px;letter-spacing:-0.509px;color:#2a2a2a">Stress</div>
<div style="left:432.4px;top:390px;width:22.4px;height:10.4px;background:linear-gradient(#f4f4f4,#e2e2e2);border:1px solid #a8a8a8;border-bottom:none;border-radius:1.5px 1.5px 0 0"></div>
<div class="t" style="left:434.80px;top:389.8px;line-height:10px;font-size:7.5px;letter-spacing:-0.397px;color:#2a2a2a">Crack</div>
<div style="left:456.6px;top:390px;width:38px;height:10.4px;background:linear-gradient(#f4f4f4,#e2e2e2);border:1px solid #a8a8a8;border-bottom:none;border-radius:1.5px 1.5px 0 0"></div>
<div class="t" style="left:459.40px;top:389.8px;line-height:10px;font-size:7.5px;letter-spacing:-0.095px;color:#2a2a2a">Deflection</div>
<div style="left:496.2px;top:390px;width:33px;height:10.4px;background:linear-gradient(#f4f4f4,#e2e2e2);border:1px solid #a8a8a8;border-bottom:none;border-radius:1.5px 1.5px 0 0"></div>
<div class="t" style="left:499.10px;top:389.8px;line-height:10px;font-size:7.5px;letter-spacing:-0.127px;color:#2a2a2a">Auxiliary</div>
<div style="left:332.4px;top:388.6px;width:32.8px;height:12.4px;background:#fff;border:1px solid #a8a8a8;border-bottom:none;border-radius:1.5px 1.5px 0 0"></div>
<div class="t" style="left:335.50px;top:389.8px;line-height:10px;font-size:7.5px;letter-spacing:-0.219px;color:#2a2a2a">Strength</div>
<div class="t" style="left:296.80px;top:402.4px;line-height:11px;font-size:8.3px;font-weight:bold;letter-spacing:-0.341px;color:#ee7a2a">Results presented for combination: CO1(1) (P100.0%, V100.0%)</div>
<div style="left:599.4px;top:400.5px;width:8px;height:223.1px;background:#f1f1f1;border-left:1px solid #e0e0e0"></div>
<div style="left:599.8px;top:400.6px;width:7.6px;height:10px;background:linear-gradient(90deg,#f6f6f6,#e0e0e0);border:.5px solid #d0d0d0"></div>
<svg style="left:601.6px;top:403.6px" width="4" height="3" viewBox="0 0 4 3"><path d="M0 2.8H4L2 .2Z" fill="#222"/></svg>
<svg style="left:601.6px;top:616.6px" width="4" height="3" viewBox="0 0 4 3"><path d="M0 .2H4L2 2.8Z" fill="#222"/></svg>
<div style="left:600.2px;top:411.4px;width:6.8px;height:163.2px;background:linear-gradient(90deg,#e6e6e6,#d2d2d2);border:.5px solid #c0c0c0"></div>
<div style="left:601.2px;top:491.2px;width:4.8px;height:1.7px;background:#1a1a1a"></div>
<div style="left:293.4px;top:415px;width:15.4px;height:208.6px;background:#ededed;border:1px solid #d4d4d4"></div>
<div class="t" style="left:299.20px;top:532.4px;line-height:10px;font-size:7px;letter-spacing:-2.213px;color:#666">&gt;</div>
<div style="left:308.8px;top:416px;width:279px;height:13.4px;background:linear-gradient(90deg,#fbfbfb,#f4f4f4 40%,#efefef);border:1px solid #d0d0d0"></div>
<div style="left:545px;top:416.6px;width:0.8px;height:12.4px;background:#dadada"></div>
<div style="left:565px;top:416.6px;width:0.8px;height:12.4px;background:#dadada"></div>
<div class="t" style="left:311.80px;top:418.2px;line-height:10px;font-size:7.4px;letter-spacing:-0.228px;color:#333">Concrete</div>
<div style="left:551.6px;top:417.8px;width:9.6px;height:9.6px"><svg class="ck" viewBox="0 0 10 10"><circle cx="5" cy="5" r="4.7" fill="#a4da94"/><circle cx="5" cy="5" r="4" fill="#5fba44"/><path d="M2.6 5.2 L4.3 6.9 L7.4 3.5" fill="none" stroke="#fff" stroke-width="1.3"/></svg></div>
<div style="left:308.8px;top:429.4px;width:279px;height:194.2px;background:#fbfbfb;border-left:1px solid #d0d0d0;border-right:1px solid #d0d0d0"></div>
<div style="left:311.4px;top:432.8px;width:274px;height:190.8px;background:#fff;border:.7px solid #a0a0a0"></div>
<div style="left:312.6px;top:433.4px;width:271.6px;height:190.2px;background:#9a9a9a"></div>
<div style="left:313px;top:433.6px;width:270.4px;height:15.8px;background:linear-gradient(#6c6c6c,#4c4c4c 42%,#141414 52%,#222);"></div>
<div class="t" style="left:315.90px;top:437.1px;line-height:10px;font-size:7.2px;letter-spacing:-0.101px;color:#c4c4c4">Member</div>
<div style="left:359.1px;top:433.6px;width:1px;height:15.8px;background:#6e6e6e"></div>
<div class="t" style="left:362.50px;top:437.1px;line-height:10px;font-size:7.2px;font-weight:bold;letter-spacing:-0.080px;color:#e8e8e8">X [m]</div>
<div style="left:387.9px;top:433.6px;width:1px;height:15.8px;background:#6e6e6e"></div>
<div class="t" style="left:391.30px;top:437.1px;line-height:10px;font-size:7.2px;font-weight:bold;letter-spacing:-0.119px;color:#e8e8e8">Z [m]</div>
<div style="left:418.1px;top:433.6px;width:1px;height:15.8px;background:#6e6e6e"></div>
<div class="t" style="left:421.50px;top:437.1px;line-height:10px;font-size:7.2px;font-weight:bold;letter-spacing:-0.316px;color:#e8e8e8">σc [MPa]</div>
<div style="left:450.9px;top:433.6px;width:1px;height:15.8px;background:#6e6e6e"></div>
<div class="t" style="left:454.30px;top:437.1px;line-height:10px;font-size:7.2px;font-weight:bold;letter-spacing:0.108px;color:#e8e8e8">εc [1e-4]</div>
<div style="left:484.7px;top:433.6px;width:1px;height:15.8px;background:#6e6e6e"></div>
<div class="t" style="left:488.10px;top:437.1px;line-height:10px;font-size:7.2px;font-weight:bold;letter-spacing:0.028px;color:#e8e8e8">kc2 [-]</div>
<div style="left:514.1px;top:433.6px;width:1px;height:15.8px;background:#6e6e6e"></div>
<div class="t" style="left:517.50px;top:437.1px;line-height:10px;font-size:7.2px;font-weight:bold;letter-spacing:-0.235px;color:#e8e8e8">σc/σc,lim [%]</div>
<div style="left:562.7px;top:433.6px;width:1px;height:15.8px;background:#6e6e6e"></div>
<div style="left:313px;top:449.4px;width:270.4px;height:14.8px;background:#f4f4f4;border-bottom:1px solid #d6d6d6"></div>
<div class="t" style="left:316.00px;top:452.4px;line-height:10px;font-size:6.9px;color:#3c3c3c">M3</div>
<div style="left:359.2px;top:449.4px;width:0.8px;height:14.8px;background:#d6d6d6"></div>
<div class="t" style="left:362.60px;top:452.4px;line-height:10px;font-size:6.9px;color:#3c3c3c">5.06</div>
<div style="left:388px;top:449.4px;width:0.8px;height:14.8px;background:#d6d6d6"></div>
<div class="t" style="left:391.40px;top:452.4px;line-height:10px;font-size:6.9px;color:#3c3c3c">0.00</div>
<div style="left:418.2px;top:449.4px;width:0.8px;height:14.8px;background:#d6d6d6"></div>
<div class="t" style="left:420.00px;top:452.4px;line-height:10px;font-size:6.9px;font-weight:bold;color:#1c1c1c">-13.7</div>
<div style="left:451px;top:449.4px;width:0.8px;height:14.8px;background:#d6d6d6"></div>
<div class="t" style="left:452.80px;top:452.4px;line-height:10px;font-size:6.9px;font-weight:bold;color:#1c1c1c">-8.8</div>
<div style="left:484.8px;top:449.4px;width:0.8px;height:14.8px;background:#d6d6d6"></div>
<div class="t" style="left:488.20px;top:452.4px;line-height:10px;font-size:6.9px;color:#3c3c3c">1.00</div>
<div style="left:514.2px;top:449.4px;width:0.8px;height:14.8px;background:#d6d6d6"></div>
<div class="t" style="left:517.60px;top:452.4px;line-height:10px;font-size:6.9px;font-weight:bold;color:#1c1c1c">68.5</div>
<div style="left:562.8px;top:449.4px;width:0.8px;height:14.8px;background:#d6d6d6"></div>
<div style="left:568.8px;top:452.2px;width:9.4px;height:9.4px"><svg class="ck" viewBox="0 0 10 10"><circle cx="5" cy="5" r="4.7" fill="#a4da94"/><circle cx="5" cy="5" r="4" fill="#5fba44"/><path d="M2.6 5.2 L4.3 6.9 L7.4 3.5" fill="none" stroke="#fff" stroke-width="1.3"/></svg></div>
<div style="left:313px;top:464.2px;width:270.4px;height:14.8px;background:#fff;border-bottom:1px solid #d6d6d6"></div>
<div class="t" style="left:316.00px;top:467.2px;line-height:10px;font-size:6.9px;color:#3c3c3c">M4</div>
<div style="left:359.2px;top:464.2px;width:0.8px;height:14.8px;background:#d6d6d6"></div>
<div class="t" style="left:362.60px;top:467.2px;line-height:10px;font-size:6.9px;color:#3c3c3c">9.63</div>
<div style="left:388px;top:464.2px;width:0.8px;height:14.8px;background:#d6d6d6"></div>
<div class="t" style="left:391.40px;top:467.2px;line-height:10px;font-size:6.9px;color:#3c3c3c">0.00</div>
<div style="left:418.2px;top:464.2px;width:0.8px;height:14.8px;background:#d6d6d6"></div>
<div class="t" style="left:420.00px;top:467.2px;line-height:10px;font-size:6.9px;font-weight:bold;color:#1c1c1c">-13.6</div>
<div style="left:451px;top:464.2px;width:0.8px;height:14.8px;background:#d6d6d6"></div>
<div class="t" style="left:452.80px;top:467.2px;line-height:10px;font-size:6.9px;font-weight:bold;color:#1c1c1c">-8.7</div>
<div style="left:484.8px;top:464.2px;width:0.8px;height:14.8px;background:#d6d6d6"></div>
<div class="t" style="left:488.20px;top:467.2px;line-height:10px;font-size:6.9px;color:#3c3c3c">1.00</div>
<div style="left:514.2px;top:464.2px;width:0.8px;height:14.8px;background:#d6d6d6"></div>
<div class="t" style="left:517.60px;top:467.2px;line-height:10px;font-size:6.9px;font-weight:bold;color:#1c1c1c">68.0</div>
<div style="left:562.8px;top:464.2px;width:0.8px;height:14.8px;background:#d6d6d6"></div>
<div style="left:568.8px;top:467px;width:9.4px;height:9.4px"><svg class="ck" viewBox="0 0 10 10"><circle cx="5" cy="5" r="4.7" fill="#a4da94"/><circle cx="5" cy="5" r="4" fill="#5fba44"/><path d="M2.6 5.2 L4.3 6.9 L7.4 3.5" fill="none" stroke="#fff" stroke-width="1.3"/></svg></div>
<div style="left:313px;top:479px;width:270.4px;height:14.8px;background:#fff;border-bottom:1px solid #d6d6d6"></div>
<div class="t" style="left:316.00px;top:482px;line-height:10px;font-size:6.9px;color:#3c3c3c">M2</div>
<div style="left:359.2px;top:479px;width:0.8px;height:14.8px;background:#d6d6d6"></div>
<div class="t" style="left:362.60px;top:482px;line-height:10px;font-size:6.9px;color:#3c3c3c">0.37</div>
<div style="left:388px;top:479px;width:0.8px;height:14.8px;background:#d6d6d6"></div>
<div class="t" style="left:391.40px;top:482px;line-height:10px;font-size:6.9px;color:#3c3c3c">0.00</div>
<div style="left:418.2px;top:479px;width:0.8px;height:14.8px;background:#d6d6d6"></div>
<div class="t" style="left:420.00px;top:482px;line-height:10px;font-size:6.9px;font-weight:bold;color:#1c1c1c">-13.6</div>
<div style="left:451px;top:479px;width:0.8px;height:14.8px;background:#d6d6d6"></div>
<div class="t" style="left:452.80px;top:482px;line-height:10px;font-size:6.9px;font-weight:bold;color:#1c1c1c">-8.7</div>
<div style="left:484.8px;top:479px;width:0.8px;height:14.8px;background:#d6d6d6"></div>
<div class="t" style="left:488.20px;top:482px;line-height:10px;font-size:6.9px;color:#3c3c3c">1.00</div>
<div style="left:514.2px;top:479px;width:0.8px;height:14.8px;background:#d6d6d6"></div>
<div class="t" style="left:517.60px;top:482px;line-height:10px;font-size:6.9px;font-weight:bold;color:#1c1c1c">67.9</div>
<div style="left:562.8px;top:479px;width:0.8px;height:14.8px;background:#d6d6d6"></div>
<div style="left:568.8px;top:481.8px;width:9.4px;height:9.4px"><svg class="ck" viewBox="0 0 10 10"><circle cx="5" cy="5" r="4.7" fill="#a4da94"/><circle cx="5" cy="5" r="4" fill="#5fba44"/><path d="M2.6 5.2 L4.3 6.9 L7.4 3.5" fill="none" stroke="#fff" stroke-width="1.3"/></svg></div>
<div style="left:313px;top:493.8px;width:270.4px;height:14.8px;background:#fff;border-bottom:1px solid #d6d6d6"></div>
<div class="t" style="left:316.00px;top:496.8px;line-height:10px;font-size:6.9px;color:#3c3c3c">M5</div>
<div style="left:359.2px;top:493.8px;width:0.8px;height:14.8px;background:#d6d6d6"></div>
<div class="t" style="left:362.60px;top:496.8px;line-height:10px;font-size:6.9px;color:#3c3c3c">9.76</div>
<div style="left:388px;top:493.8px;width:0.8px;height:14.8px;background:#d6d6d6"></div>
<div class="t" style="left:391.40px;top:496.8px;line-height:10px;font-size:6.9px;color:#3c3c3c">0.00</div>
<div style="left:418.2px;top:493.8px;width:0.8px;height:14.8px;background:#d6d6d6"></div>
<div class="t" style="left:420.00px;top:496.8px;line-height:10px;font-size:6.9px;font-weight:bold;color:#1c1c1c">-13.4</div>
<div style="left:451px;top:493.8px;width:0.8px;height:14.8px;background:#d6d6d6"></div>
<div class="t" style="left:452.80px;top:496.8px;line-height:10px;font-size:6.9px;font-weight:bold;color:#1c1c1c">-8.5</div>
<div style="left:484.8px;top:493.8px;width:0.8px;height:14.8px;background:#d6d6d6"></div>
<div class="t" style="left:488.20px;top:496.8px;line-height:10px;font-size:6.9px;color:#3c3c3c">1.00</div>
<div style="left:514.2px;top:493.8px;width:0.8px;height:14.8px;background:#d6d6d6"></div>
<div class="t" style="left:517.60px;top:496.8px;line-height:10px;font-size:6.9px;font-weight:bold;color:#1c1c1c">67.1</div>
<div style="left:562.8px;top:493.8px;width:0.8px;height:14.8px;background:#d6d6d6"></div>
<div style="left:568.8px;top:496.6px;width:9.4px;height:9.4px"><svg class="ck" viewBox="0 0 10 10"><circle cx="5" cy="5" r="4.7" fill="#a4da94"/><circle cx="5" cy="5" r="4" fill="#5fba44"/><path d="M2.6 5.2 L4.3 6.9 L7.4 3.5" fill="none" stroke="#fff" stroke-width="1.3"/></svg></div>
<div style="left:313px;top:508.6px;width:270.4px;height:14.8px;background:#fff;border-bottom:1px solid #d6d6d6"></div>
<div class="t" style="left:316.00px;top:511.6px;line-height:10px;font-size:6.9px;color:#3c3c3c">M1</div>
<div style="left:359.2px;top:508.6px;width:0.8px;height:14.8px;background:#d6d6d6"></div>
<div class="t" style="left:362.60px;top:511.6px;line-height:10px;font-size:6.9px;color:#3c3c3c">0.24</div>
<div style="left:388px;top:508.6px;width:0.8px;height:14.8px;background:#d6d6d6"></div>
<div class="t" style="left:391.40px;top:511.6px;line-height:10px;font-size:6.9px;color:#3c3c3c">0.00</div>
<div style="left:418.2px;top:508.6px;width:0.8px;height:14.8px;background:#d6d6d6"></div>
<div class="t" style="left:420.00px;top:511.6px;line-height:10px;font-size:6.9px;font-weight:bold;color:#1c1c1c">-13.4</div>
<div style="left:451px;top:508.6px;width:0.8px;height:14.8px;background:#d6d6d6"></div>
<div class="t" style="left:452.80px;top:511.6px;line-height:10px;font-size:6.9px;font-weight:bold;color:#1c1c1c">-8.5</div>
<div style="left:484.8px;top:508.6px;width:0.8px;height:14.8px;background:#d6d6d6"></div>
<div class="t" style="left:488.20px;top:511.6px;line-height:10px;font-size:6.9px;color:#3c3c3c">1.00</div>
<div style="left:514.2px;top:508.6px;width:0.8px;height:14.8px;background:#d6d6d6"></div>
<div class="t" style="left:517.60px;top:511.6px;line-height:10px;font-size:6.9px;font-weight:bold;color:#1c1c1c">67.1</div>
<div style="left:562.8px;top:508.6px;width:0.8px;height:14.8px;background:#d6d6d6"></div>
<div style="left:568.8px;top:511.4px;width:9.4px;height:9.4px"><svg class="ck" viewBox="0 0 10 10"><circle cx="5" cy="5" r="4.7" fill="#a4da94"/><circle cx="5" cy="5" r="4" fill="#5fba44"/><path d="M2.6 5.2 L4.3 6.9 L7.4 3.5" fill="none" stroke="#fff" stroke-width="1.3"/></svg></div>
<div style="left:313px;top:523.4px;width:270.4px;height:14.8px;background:#fff;border-bottom:1px solid #d6d6d6"></div>
<div class="t" style="left:316.00px;top:526.4px;line-height:10px;font-size:6.9px;color:#3c3c3c">M6</div>
<div style="left:359.2px;top:523.4px;width:0.8px;height:14.8px;background:#d6d6d6"></div>
<div class="t" style="left:362.60px;top:526.4px;line-height:10px;font-size:6.9px;color:#3c3c3c">0.00</div>
<div style="left:388px;top:523.4px;width:0.8px;height:14.8px;background:#d6d6d6"></div>
<div class="t" style="left:389.80px;top:526.4px;line-height:10px;font-size:6.9px;color:#3c3c3c">-0.25</div>
<div style="left:418.2px;top:523.4px;width:0.8px;height:14.8px;background:#d6d6d6"></div>
<div class="t" style="left:420.00px;top:526.4px;line-height:10px;font-size:6.9px;font-weight:bold;color:#1c1c1c">-5.2</div>
<div style="left:451px;top:523.4px;width:0.8px;height:14.8px;background:#d6d6d6"></div>
<div class="t" style="left:452.80px;top:526.4px;line-height:10px;font-size:6.9px;font-weight:bold;color:#1c1c1c">-2.8</div>
<div style="left:484.8px;top:523.4px;width:0.8px;height:14.8px;background:#d6d6d6"></div>
<div class="t" style="left:488.20px;top:526.4px;line-height:10px;font-size:6.9px;color:#3c3c3c">1.00</div>
<div style="left:514.2px;top:523.4px;width:0.8px;height:14.8px;background:#d6d6d6"></div>
<div class="t" style="left:517.60px;top:526.4px;line-height:10px;font-size:6.9px;font-weight:bold;color:#1c1c1c">26.1</div>
<div style="left:562.8px;top:523.4px;width:0.8px;height:14.8px;background:#d6d6d6"></div>
<div style="left:568.8px;top:526.2px;width:9.4px;height:9.4px"><svg class="ck" viewBox="0 0 10 10"><circle cx="5" cy="5" r="4.7" fill="#a4da94"/><circle cx="5" cy="5" r="4" fill="#5fba44"/><path d="M2.6 5.2 L4.3 6.9 L7.4 3.5" fill="none" stroke="#fff" stroke-width="1.3"/></svg></div>
<div style="left:313px;top:538.2px;width:270.4px;height:14.8px;background:#fff;border-bottom:1px solid #d6d6d6"></div>
<div class="t" style="left:316.00px;top:541.2px;line-height:10px;font-size:6.9px;color:#3c3c3c">M7</div>
<div style="left:359.2px;top:538.2px;width:0.8px;height:14.8px;background:#d6d6d6"></div>
<div class="t" style="left:362.60px;top:541.2px;line-height:10px;font-size:6.9px;color:#3c3c3c">10.00</div>
<div style="left:388px;top:538.2px;width:0.8px;height:14.8px;background:#d6d6d6"></div>
<div class="t" style="left:389.80px;top:541.2px;line-height:10px;font-size:6.9px;color:#3c3c3c">-0.25</div>
<div style="left:418.2px;top:538.2px;width:0.8px;height:14.8px;background:#d6d6d6"></div>
<div class="t" style="left:420.00px;top:541.2px;line-height:10px;font-size:6.9px;font-weight:bold;color:#1c1c1c">-5.2</div>
<div style="left:451px;top:538.2px;width:0.8px;height:14.8px;background:#d6d6d6"></div>
<div class="t" style="left:452.80px;top:541.2px;line-height:10px;font-size:6.9px;font-weight:bold;color:#1c1c1c">-2.8</div>
<div style="left:484.8px;top:538.2px;width:0.8px;height:14.8px;background:#d6d6d6"></div>
<div class="t" style="left:488.20px;top:541.2px;line-height:10px;font-size:6.9px;color:#3c3c3c">1.00</div>
<div style="left:514.2px;top:538.2px;width:0.8px;height:14.8px;background:#d6d6d6"></div>
<div class="t" style="left:517.60px;top:541.2px;line-height:10px;font-size:6.9px;font-weight:bold;color:#1c1c1c">26.1</div>
<div style="left:562.8px;top:538.2px;width:0.8px;height:14.8px;background:#d6d6d6"></div>
<div style="left:568.8px;top:541px;width:9.4px;height:9.4px"><svg class="ck" viewBox="0 0 10 10"><circle cx="5" cy="5" r="4.7" fill="#a4da94"/><circle cx="5" cy="5" r="4" fill="#5fba44"/><path d="M2.6 5.2 L4.3 6.9 L7.4 3.5" fill="none" stroke="#fff" stroke-width="1.3"/></svg></div>
<div style="left:313px;top:553px;width:270.4px;height:14.8px;background:#fff;border-bottom:1px solid #d6d6d6"></div>
<div class="t" style="left:316.00px;top:556px;line-height:10px;font-size:6.9px;color:#3c3c3c">M7</div>
<div style="left:359.2px;top:553px;width:0.8px;height:14.8px;background:#d6d6d6"></div>
<div class="t" style="left:362.60px;top:556px;line-height:10px;font-size:6.9px;color:#3c3c3c">10.06</div>
<div style="left:388px;top:553px;width:0.8px;height:14.8px;background:#d6d6d6"></div>
<div class="t" style="left:389.80px;top:556px;line-height:10px;font-size:6.9px;color:#3c3c3c">-0.25</div>
<div style="left:418.2px;top:553px;width:0.8px;height:14.8px;background:#d6d6d6"></div>
<div class="t" style="left:420.00px;top:556px;line-height:10px;font-size:6.9px;color:#3c3c3c">-1.3</div>
<div style="left:451px;top:553px;width:0.8px;height:14.8px;background:#d6d6d6"></div>
<div class="t" style="left:452.80px;top:556px;line-height:10px;font-size:6.9px;color:#3c3c3c">-0.7</div>
<div style="left:484.8px;top:553px;width:0.8px;height:14.8px;background:#d6d6d6"></div>
<div class="t" style="left:488.20px;top:556px;line-height:10px;font-size:6.9px;font-weight:bold;color:#1c1c1c">1.00</div>
<div style="left:514.2px;top:553px;width:0.8px;height:14.8px;background:#d6d6d6"></div>
<div class="t" style="left:517.60px;top:556px;line-height:10px;font-size:6.9px;color:#3c3c3c">6.7</div>
<div style="left:562.8px;top:553px;width:0.8px;height:14.8px;background:#d6d6d6"></div>
<div style="left:568.8px;top:555.8px;width:9.4px;height:9.4px"><svg class="ck" viewBox="0 0 10 10"><circle cx="5" cy="5" r="4.7" fill="#a4da94"/><circle cx="5" cy="5" r="4" fill="#5fba44"/><path d="M2.6 5.2 L4.3 6.9 L7.4 3.5" fill="none" stroke="#fff" stroke-width="1.3"/></svg></div>
<div style="left:313px;top:567.8px;width:270.4px;height:14.8px;background:#fff;border-bottom:1px solid #d6d6d6"></div>
<div class="t" style="left:316.00px;top:570.8px;line-height:10px;font-size:6.9px;color:#3c3c3c">M2</div>
<div style="left:359.2px;top:567.8px;width:0.8px;height:14.8px;background:#d6d6d6"></div>
<div class="t" style="left:362.60px;top:570.8px;line-height:10px;font-size:6.9px;color:#3c3c3c">0.35</div>
<div style="left:388px;top:567.8px;width:0.8px;height:14.8px;background:#d6d6d6"></div>
<div class="t" style="left:389.80px;top:570.8px;line-height:10px;font-size:6.9px;color:#3c3c3c">-0.28</div>
<div style="left:418.2px;top:567.8px;width:0.8px;height:14.8px;background:#d6d6d6"></div>
<div class="t" style="left:420.00px;top:570.8px;line-height:10px;font-size:6.9px;color:#3c3c3c">-0.2</div>
<div style="left:451px;top:567.8px;width:0.8px;height:14.8px;background:#d6d6d6"></div>
<div class="t" style="left:452.80px;top:570.8px;line-height:10px;font-size:6.9px;color:#3c3c3c">-0.1</div>
<div style="left:484.8px;top:567.8px;width:0.8px;height:14.8px;background:#d6d6d6"></div>
<div class="t" style="left:488.20px;top:570.8px;line-height:10px;font-size:6.9px;font-weight:bold;color:#1c1c1c">0.79</div>
<div style="left:514.2px;top:567.8px;width:0.8px;height:14.8px;background:#d6d6d6"></div>
<div class="t" style="left:517.60px;top:570.8px;line-height:10px;font-size:6.9px;color:#3c3c3c">1.4</div>
<div style="left:562.8px;top:567.8px;width:0.8px;height:14.8px;background:#d6d6d6"></div>
<div style="left:568.8px;top:570.6px;width:9.4px;height:9.4px"><svg class="ck" viewBox="0 0 10 10"><circle cx="5" cy="5" r="4.7" fill="#a4da94"/><circle cx="5" cy="5" r="4" fill="#5fba44"/><path d="M2.6 5.2 L4.3 6.9 L7.4 3.5" fill="none" stroke="#fff" stroke-width="1.3"/></svg></div>
<div style="left:313px;top:582.6px;width:270.4px;height:14.8px;background:#fff;border-bottom:1px solid #d6d6d6"></div>
<div class="t" style="left:316.00px;top:585.6px;line-height:10px;font-size:6.9px;color:#3c3c3c">M4</div>
<div style="left:359.2px;top:582.6px;width:0.8px;height:14.8px;background:#d6d6d6"></div>
<div class="t" style="left:362.60px;top:585.6px;line-height:10px;font-size:6.9px;color:#3c3c3c">9.65</div>
<div style="left:388px;top:582.6px;width:0.8px;height:14.8px;background:#d6d6d6"></div>
<div class="t" style="left:389.80px;top:585.6px;line-height:10px;font-size:6.9px;color:#3c3c3c">-0.28</div>
<div style="left:418.2px;top:582.6px;width:0.8px;height:14.8px;background:#d6d6d6"></div>
<div class="t" style="left:420.00px;top:585.6px;line-height:10px;font-size:6.9px;color:#3c3c3c">-0.2</div>
<div style="left:451px;top:582.6px;width:0.8px;height:14.8px;background:#d6d6d6"></div>
<div class="t" style="left:452.80px;top:585.6px;line-height:10px;font-size:6.9px;color:#3c3c3c">-0.1</div>
<div style="left:484.8px;top:582.6px;width:0.8px;height:14.8px;background:#d6d6d6"></div>
<div class="t" style="left:488.20px;top:585.6px;line-height:10px;font-size:6.9px;font-weight:bold;color:#1c1c1c">0.79</div>
<div style="left:514.2px;top:582.6px;width:0.8px;height:14.8px;background:#d6d6d6"></div>
<div class="t" style="left:517.60px;top:585.6px;line-height:10px;font-size:6.9px;color:#3c3c3c">1.4</div>
<div style="left:562.8px;top:582.6px;width:0.8px;height:14.8px;background:#d6d6d6"></div>
<div style="left:568.8px;top:585.4px;width:9.4px;height:9.4px"><svg class="ck" viewBox="0 0 10 10"><circle cx="5" cy="5" r="4.7" fill="#a4da94"/><circle cx="5" cy="5" r="4" fill="#5fba44"/><path d="M2.6 5.2 L4.3 6.9 L7.4 3.5" fill="none" stroke="#fff" stroke-width="1.3"/></svg></div>
<div style="left:313px;top:597.4px;width:270.4px;height:14.8px;background:#fff;border-bottom:1px solid #d6d6d6"></div>
<div class="t" style="left:316.00px;top:600.4px;line-height:10px;font-size:6.9px;color:#3c3c3c">M6</div>
<div style="left:359.2px;top:597.4px;width:0.8px;height:14.8px;background:#d6d6d6"></div>
<div class="t" style="left:361.00px;top:600.4px;line-height:10px;font-size:6.9px;color:#3c3c3c">-0.24</div>
<div style="left:388px;top:597.4px;width:0.8px;height:14.8px;background:#d6d6d6"></div>
<div class="t" style="left:389.80px;top:600.4px;line-height:10px;font-size:6.9px;color:#3c3c3c">-0.25</div>
<div style="left:418.2px;top:597.4px;width:0.8px;height:14.8px;background:#d6d6d6"></div>
<div class="t" style="left:420.00px;top:600.4px;line-height:10px;font-size:6.9px;color:#3c3c3c">-0.2</div>
<div style="left:451px;top:597.4px;width:0.8px;height:14.8px;background:#d6d6d6"></div>
<div class="t" style="left:452.80px;top:600.4px;line-height:10px;font-size:6.9px;color:#3c3c3c">-0.1</div>
<div style="left:484.8px;top:597.4px;width:0.8px;height:14.8px;background:#d6d6d6"></div>
<div class="t" style="left:488.20px;top:600.4px;line-height:10px;font-size:6.9px;font-weight:bold;color:#1c1c1c">1.00</div>
<div style="left:514.2px;top:597.4px;width:0.8px;height:14.8px;background:#d6d6d6"></div>
<div class="t" style="left:517.60px;top:600.4px;line-height:10px;font-size:6.9px;color:#3c3c3c">0.0</div>
<div style="left:562.8px;top:597.4px;width:0.8px;height:14.8px;background:#d6d6d6"></div>
<div style="left:568.8px;top:600.2px;width:9.4px;height:9.4px"><svg class="ck" viewBox="0 0 10 10"><circle cx="5" cy="5" r="4.7" fill="#a4da94"/><circle cx="5" cy="5" r="4" fill="#5fba44"/><path d="M2.6 5.2 L4.3 6.9 L7.4 3.5" fill="none" stroke="#fff" stroke-width="1.3"/></svg></div>
<div style="left:313px;top:612.2px;width:270.4px;height:11.4px;background:#fff;border-bottom:1px solid #d6d6d6"></div>
<div class="t" style="left:316.00px;top:615.2px;line-height:10px;font-size:6.9px;color:#3c3c3c">M1</div>
<div style="left:359.2px;top:612.2px;width:0.8px;height:11.4px;background:#d6d6d6"></div>
<div class="t" style="left:362.60px;top:615.2px;line-height:10px;font-size:6.9px;color:#3c3c3c">0.24</div>
<div style="left:388px;top:612.2px;width:0.8px;height:11.4px;background:#d6d6d6"></div>
<div class="t" style="left:389.80px;top:615.2px;line-height:10px;font-size:6.9px;color:#3c3c3c">-0.25</div>
<div style="left:418.2px;top:612.2px;width:0.8px;height:11.4px;background:#d6d6d6"></div>
<div class="t" style="left:421.60px;top:615.2px;line-height:10px;font-size:6.9px;color:#3c3c3c">0.0</div>
<div style="left:451px;top:612.2px;width:0.8px;height:11.4px;background:#d6d6d6"></div>
<div class="t" style="left:454.40px;top:615.2px;line-height:10px;font-size:6.9px;color:#3c3c3c">0.0</div>
<div style="left:484.8px;top:612.2px;width:0.8px;height:11.4px;background:#d6d6d6"></div>
<div class="t" style="left:488.20px;top:615.2px;line-height:10px;font-size:6.9px;font-weight:bold;color:#1c1c1c">0.65</div>
<div style="left:514.2px;top:612.2px;width:0.8px;height:11.4px;background:#d6d6d6"></div>
<div class="t" style="left:517.60px;top:615.2px;line-height:10px;font-size:6.9px;color:#3c3c3c">0.0</div>
<div style="left:562.8px;top:612.2px;width:0.8px;height:11.4px;background:#d6d6d6"></div>
<div style="left:568.8px;top:615px;width:9.4px;height:9.4px"><svg class="ck" viewBox="0 0 10 10"><circle cx="5" cy="5" r="4.7" fill="#a4da94"/><circle cx="5" cy="5" r="4" fill="#5fba44"/><path d="M2.6 5.2 L4.3 6.9 L7.4 3.5" fill="none" stroke="#fff" stroke-width="1.3"/></svg></div>
<div style="left:613.6px;top:106.3px;width:550.6px;height:519.7px;background:#fff"></div>
<div style="left:613.6px;top:106px;width:550.6px;height:0.6px;background:#9a9a9a"></div>
<div style="left:613.6px;top:93.6px;width:22.6px;height:13.4px;background:#fff"></div>
<div class="t" style="left:617.20px;top:96px;line-height:10px;font-size:7.6px;letter-spacing:-0.168px;color:#222">Main</div>
<div style="left:616px;top:108.8px;width:546px;height:515.4px;background:#fff;border:.7px solid #a2a2a2;border-right-color:#dcdcdc;border-bottom-color:#dcdcdc"></div>
<div style="left:619px;top:111.5px;width:14px;height:14.3px;background:linear-gradient(#e4e4e4,#d4d4d4);border:.6px solid #c4c4c4;border-radius:1px"><svg width="14" height="14" viewBox="0 0 14 14"><g stroke="#8a8a8a" stroke-width=".9" fill="none"><path d="M3 3L5.2 5.2M3 3H4.8M3 3V4.8"/><path d="M11 3L8.8 5.2M11 3H9.2M11 3V4.8"/><path d="M3 11L5.2 8.8M3 11H4.8M3 11V9.2"/><path d="M11 11L8.8 8.8M11 11H9.2M11 11V9.2"/></g></svg></div>
<svg style="left:636px;top:338px" width="510" height="56" viewBox="636 338 510 56">
<defs>
<clipPath id="mcp"><path d="M644.2 351H1134.4V363.4H1107L1060.4 388.6H718.4L671 363.4H644.2Z"/></clipPath>
<linearGradient id="mtop" x1="0" y1="0" x2="0" y2="1">
<stop offset="0" stop-color="#c41408"/><stop offset=".12" stop-color="#ea2a0a"/><stop offset=".27" stop-color="#f8620e"/><stop offset=".42" stop-color="#fcb818"/><stop offset=".52" stop-color="#f6e61a"/><stop offset=".9" stop-color="#f6e61a"/><stop offset="1" stop-color="#f6e61a" stop-opacity="0"/>
</linearGradient>
<linearGradient id="mtop2" x1="0" y1="0" x2="0" y2="1">
<stop offset="0" stop-color="#c81808"/><stop offset=".3" stop-color="#ee3a0a"/><stop offset=".55" stop-color="#fa8a14"/><stop offset=".8" stop-color="#fcd018"/><stop offset="1" stop-color="#f6e61a" stop-opacity="0"/>
</linearGradient>
<linearGradient id="myl" x1="0" y1="0" x2="1" y2="0">
<stop offset="0" stop-color="#f6e41a"/><stop offset=".6" stop-color="#f6e41a"/><stop offset="1" stop-color="#f6e41a" stop-opacity="0"/>
</linearGradient>
<linearGradient id="myr" x1="1" y1="0" x2="0" y2="0">
<stop offset="0" stop-color="#f6e41a"/><stop offset=".6" stop-color="#f6e41a"/><stop offset="1" stop-color="#f6e41a" stop-opacity="0"/>
</linearGradient>
<filter id="mb1" x="-20%" y="-20%" width="140%" height="140%"><feGaussianBlur stdDeviation="1.1"/></filter>
<filter id="mb2" x="-20%" y="-20%" width="140%" height="140%"><feGaussianBlur stdDeviation="2"/></filter>
</defs>
<g clip-path="url(#mcp)">
<rect x="640" y="348" width="500" height="44" fill="#c8cc14"/>
<!-- yellow zones -->
<rect x="718" y="351" width="65.2" height="38" fill="#f6e41a"/>
<rect x="995.7" y="351" width="65.3" height="38" fill="#f6e41a"/>
<g fill="#f6e41a"><path d="M783.0 387L783.0 377.3L786.0 374.4L788.5 371.5L790.0 378.8L792.3 377.9L792.3 387Z"/><path d="M995.9 387L995.9 377.3L992.9 374.4L990.4 371.5L988.9 378.8L986.6 377.9L986.6 387Z"/><path d="M792.2 387L792.2 377.9L795.2 375.2L797.7 372.5L799.2 379.2L801.5 378.5L801.5 387Z"/><path d="M986.7 387L986.7 377.9L983.7 375.2L981.2 372.5L979.7 379.2L977.4 378.5L977.4 387Z"/><path d="M801.5 387L801.5 378.5L804.5 376.0L807.0 373.5L808.5 379.8L810.8 378.8L810.8 387Z"/><path d="M977.4 387L977.4 378.5L974.4 376.0L971.9 373.5L970.4 379.8L968.1 378.8L968.1 387Z"/><path d="M810.7 387L810.7 378.8L813.7 376.4L816.2 374.0L817.7 380.0L820.0 380.3L820.0 387Z"/><path d="M968.2 387L968.2 378.8L965.2 376.4L962.7 374.0L961.2 380.0L958.9 380.3L958.9 387Z"/><path d="M820.0 387L820.0 380.3L823.0 378.4L825.5 376.5L827.0 381.2L829.3 382.1L829.3 387Z"/><path d="M958.9 387L958.9 380.3L955.9 378.4L953.4 376.5L951.9 381.2L949.6 382.1L949.6 387Z"/><path d="M829.2 387L829.2 382.1L832.2 380.8L834.7 379.5L836.2 382.8L838.5 383.9L838.5 387Z"/><path d="M949.7 387L949.7 382.1L946.7 380.8L944.2 379.5L942.7 382.8L940.4 383.9L940.4 387Z"/><path d="M838.4 387L838.4 383.9L841.4 383.2L843.9 382.5L845.4 384.2L847.7 386.0L847.7 387Z"/><path d="M940.5 387L940.5 383.9L937.5 383.2L935.0 382.5L933.5 384.2L931.2 386.0L931.2 387Z"/></g>
<!-- green patches inside yellow -->
<g filter="url(#mb1)" fill="#ccd016">
<path d="M741 378L749 373L753 381L744 386Z"/><path d="M1038 378L1030 373L1026 381L1035 386Z"/><path d="M726 377L733 371L735 377L729 383Z"/><path d="M1053 377L1046 371L1044 377L1050 383Z"/>
<path d="M674 366H716V384L700 378Z"/><path d="M1105 366H1063V384L1079 378Z"/>
<rect x="644" y="353" width="13" height="11"/><rect x="1122" y="353" width="13" height="11"/>
</g>
<!-- top stress band -->
<rect x="664" y="351" width="451" height="12.4" fill="url(#mtop)"/>
<g filter="url(#mb1)">
<path d="M660 351H742L730 355.6L700 357L676 355.6L664 360Z" fill="#f4500c"/>
<path d="M1119 351H1037L1049 355.6L1079 357L1103 355.6L1115 360Z" fill="#f4500c"/>
<path d="M664 351H730L715 353.8H680Z" fill="#d81c08"/>
<path d="M1115 351H1049L1064 353.8H1099Z" fill="#d81c08"/>
<path d="M800 351H980L960 354.6H820Z" fill="#d01808"/>
<rect x="656" y="353" width="10" height="11" fill="#f6c01a"/><rect x="1113" y="353" width="10" height="11" fill="#f6c01a"/>
<rect x="660" y="356" width="5" height="8" fill="#f08a14"/><rect x="1114" y="356" width="5" height="8" fill="#f08a14"/>
</g>
<!-- struts -->
<g filter="url(#mb1)">
<path d="M717 389L722 372L734 356L738 358L728 374L723 389Z" fill="#f4680e"/>
<path d="M1062 389L1057 372L1045 356L1041 358L1051 374L1056 389Z" fill="#f4680e"/>
<path d="M718 389L721 378L724 380L722 389Z" fill="#e0300a"/>
<path d="M1061 389L1058 378L1055 380L1057 389Z" fill="#e0300a"/>
<path d="M745 360L752 364L760 358" stroke="#fbb018" stroke-width="2" fill="none"/>
<path d="M1034 360L1027 364L1019 358" stroke="#fbb018" stroke-width="2" fill="none"/>
</g>
<!-- bottom strip -->
<rect x="718" y="385.8" width="343" height="3" fill="#e89a18"/>
<path d="M718 386.2H1061" stroke="#b8780e" stroke-width=".5"/>
<!-- inclined bars -->
<path d="M671.6 362.4L719 387.6" stroke="#f2b21c" stroke-width="3.2"/>
<path d="M671.6 362.4L719 387.6" stroke="#6a3a08" stroke-width="3.2" stroke-dasharray=".9 1.1"/>
<path d="M1119.4 352.4L1060 387.6" stroke="#f2b21c" stroke-width="3.2"/>
<path d="M1119.4 352.4L1060 387.6" stroke="#6a3a08" stroke-width="3.2" stroke-dasharray=".9 1.1"/>
<path d="M659 353L671 363.4" stroke="#e86a10" stroke-width="1.6"/>
<!-- vertical lines -->
<g stroke="#4a3a08" stroke-width=".5" opacity=".8"><path d="M718.5 351V389"/><path d="M727.7 351V389"/><path d="M737.0 351V389"/><path d="M746.2 351V389"/><path d="M755.5 351V389"/><path d="M764.7 351V389"/><path d="M774.0 351V389"/><path d="M783.2 351V389"/><path d="M792.4 351V389"/><path d="M801.7 351V389"/><path d="M810.9 351V389"/><path d="M820.2 351V389"/><path d="M829.4 351V389"/><path d="M838.7 351V389"/><path d="M847.9 351V389"/><path d="M857.1 351V389"/><path d="M866.4 351V389"/><path d="M875.6 351V389"/><path d="M884.9 351V389"/><path d="M894.1 351V389"/><path d="M903.4 351V389"/><path d="M912.6 351V389"/><path d="M921.8 351V389"/><path d="M931.1 351V389"/><path d="M940.3 351V389"/><path d="M949.6 351V389"/><path d="M958.8 351V389"/><path d="M968.1 351V389"/><path d="M977.3 351V389"/><path d="M986.5 351V389"/><path d="M995.8 351V389"/><path d="M1005.0 351V389"/><path d="M1014.3 351V389"/><path d="M1023.5 351V389"/><path d="M1032.8 351V389"/><path d="M1042.0 351V389"/><path d="M1051.2 351V389"/><path d="M1060.5 351V389"/><path d="M695.8 351V389"/><path d="M701.0 351V389"/><path d="M705.4 351V389"/><path d="M709.8 351V389"/><path d="M714.1 351V389"/><path d="M649.0 351V389"/><path d="M654.8 351V389"/><path d="M658.6 351V389"/><path d="M676.0 351V389"/><path d="M681.0 351V389"/><path d="M686.0 351V389"/><path d="M691.0 351V389"/><path d="M1083.1 351V389"/><path d="M1077.9 351V389"/><path d="M1073.5 351V389"/><path d="M1069.1 351V389"/><path d="M1064.8 351V389"/><path d="M1129.9 351V389"/><path d="M1124.1 351V389"/><path d="M1120.3 351V389"/><path d="M1102.9 351V389"/><path d="M1097.9 351V389"/><path d="M1092.9 351V389"/><path d="M1087.9 351V389"/></g>
<path d="M664 362.6H1115" stroke="#8a7a10" stroke-width=".4" opacity=".7"/>
</g>
<path d="M644.2 351H1134.4V363.4H1107L1060.4 388.6H718.4L671 363.4H644.2Z" fill="none" stroke="#6a4a0c" stroke-width=".8"/>
<path d="M644.2 351H1134.4" stroke="#5a1408" stroke-width=".8"/>
<g fill="#fff" stroke="#222" stroke-width=".9"><circle cx="737" cy="369.9" r="6.5"/><circle cx="889.4" cy="369.9" r="6.5"/><circle cx="1041.9" cy="369.9" r="6.5"/></g>
<!-- supports -->
<g stroke="#20208a" stroke-width="1.25" fill="none">
<path d="M649.6 363.8H670.6"/><path d="M658.6 364L650.4 375.6H667.2Z"/>
<path d="M1109.6 363.8H1130.4"/><path d="M1120 364L1111.4 375.6H1128.8Z"/><path d="M1111.4 378.4H1128.8"/>
</g>
<rect x="670" y="356.2" width="16.8" height="6" fill="#fff"/>
<circle cx="669.8" cy="363" r="1.1" fill="#111"/><circle cx="892" cy="351.2" r="1.2" fill="#111"/>
<path d="M892 351.4H913" stroke="#fff" stroke-width=".8"/>
<text x="670.4" y="361.6" font-family="Liberation Sans,sans-serif" font-weight="bold" font-size="6.8" fill="#111">0.0 %</text>
<text x="892" y="349.8" font-family="Liberation Sans,sans-serif" font-weight="bold" font-size="7" fill="#111">68.5 %</text>
</svg>
<svg style="left:1125px;top:617px" width="28" height="8" viewBox="0 0 28 8"><rect x=".4" y="2.3" width="11.4" height="3" fill="#f6b690"/><text x="12.4" y="5.2" font-family="Liberation Sans,sans-serif" font-style="italic" font-weight="bold" font-size="3.6" fill="#444" textLength="12.6" lengthAdjust="spacingAndGlyphs">StatiCa</text><path d="M.4 7.2H20" stroke="#c4c4c4" stroke-width=".4"/></svg>
</div></body></html>
